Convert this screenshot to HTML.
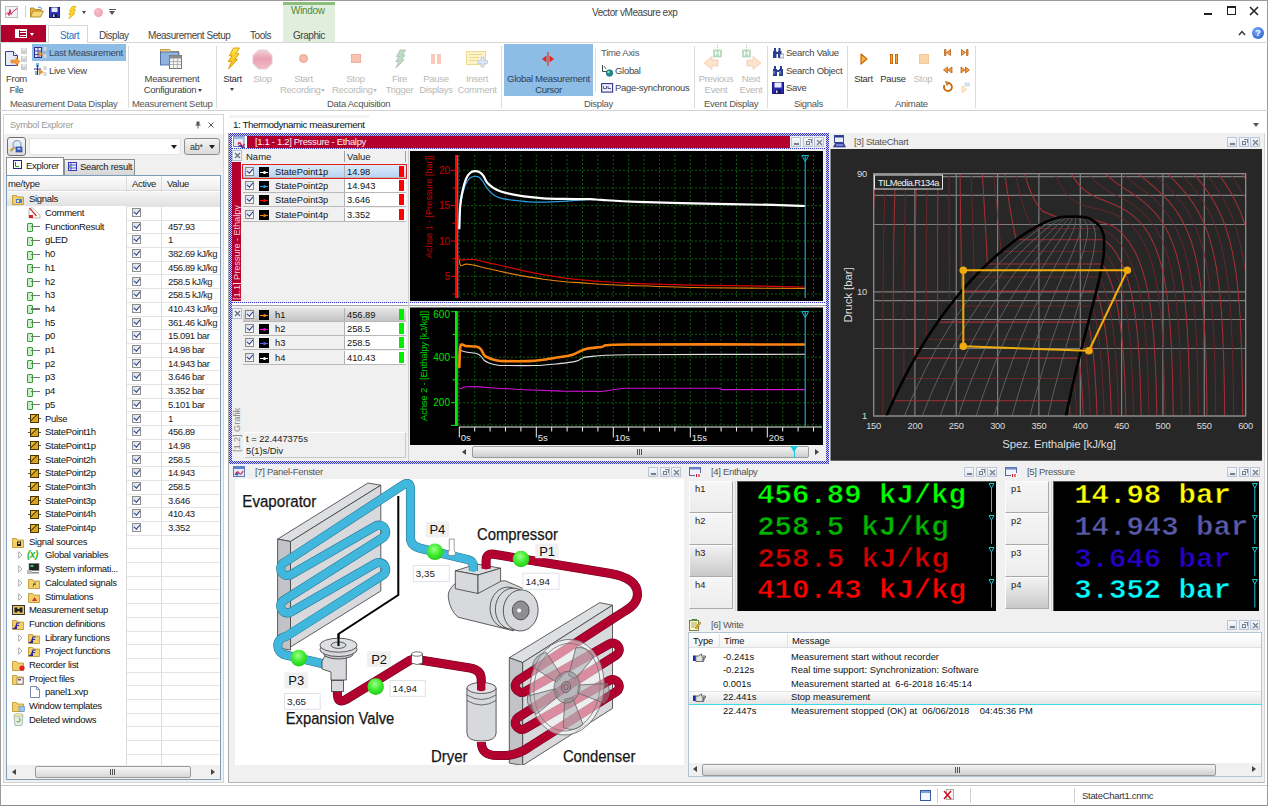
<!DOCTYPE html>
<html><head><meta charset="utf-8"><title>Vector vMeasure exp</title>
<style>
*{box-sizing:border-box;margin:0;padding:0}
html,body{width:1268px;height:806px;overflow:hidden;background:#fff}
body{font-family:"Liberation Sans",sans-serif;font-size:9.5px;letter-spacing:-0.3px;color:#444;position:relative}
.a{position:absolute}
.t{position:absolute;white-space:nowrap;line-height:12px}
.c{text-align:center}
.dis{color:#b9b9b9}
.sep{position:absolute;width:1px;background:#dcdcdc}
.wt{position:absolute;white-space:nowrap;line-height:12px;font-size:9.5px;color:#555}
.wb{position:absolute;width:10px;height:10px;border:1px solid #bcc6d6;background:linear-gradient(#f7f8fb,#dde5f0)}
/* tree */
.tr{position:absolute;left:0;width:214px;height:14px}
.tr .n{position:absolute;top:1px;white-space:nowrap;line-height:12px;color:#111}
.tr .v{position:absolute;left:161px;top:1px;white-space:nowrap;line-height:12px;color:#222;letter-spacing:-0.4px}
.cb{position:absolute;left:124.500px;top:2px;width:9px;height:9px;border:1px solid #8e8f8f;background:linear-gradient(135deg,#d8dce3,#fff)}
.cb:after{content:"";position:absolute;left:2px;top:-1px;width:2.5px;height:5px;border:solid #2b3f8f;border-width:0 1.5px 1.5px 0;transform:rotate(40deg)}
.sg{position:absolute;left:29px;top:3px;width:14px;height:8px}
.sg:before{content:"";position:absolute;left:0;top:0.500px;width:3.500px;height:7px;border:1px solid #3a9a3a;border-radius:1px;background:#c9f0c9}
.sg:after{content:"";position:absolute;left:3.500px;top:3.500px;width:9.500px;height:1.200px;background:#777}
.sp{position:absolute;left:29px;top:2px;width:13px;height:10px}
.sp:before{content:"";position:absolute;left:2px;top:.5px;width:7px;height:7px;background:linear-gradient(135deg,#e8b830 0,#e8b830 35%,#6a4a00 36%,#6a4a00 48%,#d9a520 49%);border:1px solid #4a3600;z-index:1}
.sp:after{content:"";position:absolute;left:0;top:4.500px;width:13px;height:1px;background:#555}
.mono{font-family:"Liberation Mono",monospace;font-weight:bold;letter-spacing:0}
</style></head>
<body>
<!-- window frame -->
<div class="a" style="left:0;top:0;width:1268px;height:806px;border:1px solid #9b9b9b;border-bottom-color:#8a8a8a"></div>

<!-- ===== TITLE BAR ===== -->
<div id="title">
<div class="t" style="left:592px;top:7px;font-size:10px;letter-spacing:-0.45px;color:#444">Vector vMeasure exp</div>
<!-- quick access -->
<svg class="a" style="left:5px;top:6px" width="13" height="12" viewBox="0 0 13 12"><rect x=".5" y=".5" width="12" height="11" fill="#f4f4f4" stroke="#bdbdbd"/><path d="M1 8.500l2-2 1 3 1-6 1 5 2-3 4-3" stroke="#c22050" stroke-width="1" fill="none"/></svg>
<div class="a" style="left:25px;top:6px;width:1px;height:11px;background:#ccc"></div>
<svg class="a" style="left:30px;top:6px" width="14" height="12" viewBox="0 0 14 12"><path d="M.5 11V2h3.500l1 1.500h6V5" fill="#e9b84a" stroke="#a87a18" stroke-width=".8"/><path d="M.5 11l2.500-6h10.500l-3 6z" fill="#f7d778" stroke="#a87a18" stroke-width=".8"/><path d="M8 1.500c2-1 3.500 0 4 1.500" stroke="#4477cc" stroke-width=".9" fill="none"/></svg>
<svg class="a" style="left:49px;top:7px" width="11" height="11" viewBox="0 0 11 11"><rect x=".5" y=".5" width="10" height="10" fill="#2b33b8" stroke="#1a1f80"/><rect x="2.500" y=".5" width="6" height="4.500" fill="#e9ecfa"/><rect x="3" y="7" width="5" height="3.500" fill="#14184f"/><rect x="4" y="7.500" width="1.500" height="2.500" fill="#cdd"/></svg>
<svg class="a" style="left:67px;top:6px" width="10" height="13" viewBox="0 0 10 13"><path d="M5 .5H9L6.500 4H8.700L6 7.300H8L2 13L4 8.500H1.800L4.300 5H2.500Z" fill="#ffd828" stroke="#e0a800" stroke-width=".7" stroke-linejoin="round"/></svg>
<div class="a" style="left:82px;top:11px;border:2.500px solid transparent;border-top:3px solid #444"></div>
<div class="a" style="left:94px;top:7.500px;width:9px;height:9px;border-radius:5px;background:radial-gradient(circle at 40% 40%,#f6c0cb,#e79aac)"></div>
<div class="a" style="left:109px;top:9px;width:7px;height:1px;background:#555"></div>
<div class="a" style="left:109px;top:11px;border:3.500px solid transparent;border-top:4px solid #555"></div>
<!-- context tab -->
<div class="a" style="left:283px;top:1px;width:52px;height:41px;background:#e2eedc"></div>
<div class="a" style="left:283px;top:1px;width:52px;height:4px;background:linear-gradient(#fff 0,#fff 1px,#8dbd7b 1px)"></div>
<div class="t" style="left:291px;top:5.300px;font-size:10px;color:#4e8a3a;letter-spacing:-0.3px">Window</div>
<!-- window buttons -->
<div class="a" style="left:1204px;top:13px;width:8px;height:2px;background:#222"></div>
<div class="a" style="left:1227px;top:6px;width:9px;height:9px;border:1px solid #222;border-top-width:2px"></div>
<svg class="a" style="left:1249px;top:6px" width="10" height="10"><path d="M1 1L9 9M9 1L1 9" stroke="#222" stroke-width="1.6"/></svg>
</div>

<!-- ===== TAB ROW ===== -->
<div id="tabs">
<div class="a" style="left:1px;top:25px;width:45px;height:17px;background:#b0002e"></div>
<div class="a" style="left:15px;top:29px;width:12px;height:9px;border:1px solid #fff;background:linear-gradient(90deg,#fff 0,#fff 3px,#b0002e 3px,#b0002e 4.500px,transparent 4.500px),repeating-linear-gradient(#fff 0,#fff 1px,#b0002e 1px,#b0002e 2.300px)"></div>
<div class="a" style="left:30px;top:33px;border:2.5px solid transparent;border-top:3px solid #fff"></div>
<div class="a" style="left:0;top:42px;width:1268px;height:1px;background:#d6d6d6"></div>
<div class="a" style="left:48px;top:25px;width:40px;height:18px;border:1px solid #d6d6d6;border-bottom:none;background:#fff"></div>
<div class="t" style="left:60px;top:29.700px;font-size:10px;color:#2a73c7;letter-spacing:-0.4px">Start</div>
<div class="t" style="left:99px;top:29.700px;font-size:10px;letter-spacing:-0.45px">Display</div>
<div class="t" style="left:148px;top:29.700px;font-size:10px;letter-spacing:-0.45px">Measurement Setup</div>
<div class="t" style="left:250px;top:29.700px;font-size:10px;letter-spacing:-0.45px">Tools</div>
<div class="t" style="left:293px;top:29.700px;font-size:10px;letter-spacing:-0.45px">Graphic</div>
<svg class="a" style="left:1238px;top:30px" width="8" height="6"><path d="M1 5L4 1.5L7 5" stroke="#333" stroke-width="1.4" fill="none"/></svg>
<div class="a" style="left:1252px;top:27px;width:12px;height:12px;border-radius:6px;background:radial-gradient(circle at 40% 35%,#7fb0ff,#1a4fc0);color:#fff;font-size:9px;font-weight:bold;text-align:center;line-height:12px;letter-spacing:0">?</div>
</div>

<!-- ===== RIBBON ===== -->
<div id="ribbon">
<div class="a" style="left:0;top:110px;width:1268px;height:1px;background:#d2d2d2"></div>
<!-- group separators -->
<div class="sep" style="left:128px;top:46px;height:62px"></div>
<div class="sep" style="left:216px;top:46px;height:62px"></div>
<div class="sep" style="left:501px;top:46px;height:62px"></div>
<div class="sep" style="left:595px;top:48px;height:44px"></div>
<div class="sep" style="left:694px;top:46px;height:62px"></div>
<div class="sep" style="left:767px;top:46px;height:62px"></div>
<div class="sep" style="left:847px;top:46px;height:62px"></div>
<div class="sep" style="left:975px;top:46px;height:62px"></div>
<!-- group labels -->
<div class="t" style="left:10px;top:98px;color:#555">Measurement Data Display</div>
<div class="t" style="left:132px;top:98px;color:#555">Measurement Setup</div>
<div class="t" style="left:327px;top:98px;color:#555">Data Acquisition</div>
<div class="t" style="left:584px;top:98px;color:#555">Display</div>
<div class="t" style="left:704px;top:98px;color:#555">Event Display</div>
<div class="t" style="left:794px;top:98px;color:#555">Signals</div>
<div class="t" style="left:895px;top:98px;color:#555">Animate</div>

<!-- From File -->
<svg class="a" style="left:4px;top:47px" width="24" height="24" viewBox="0 0 24 24">
<path d="M1.5 4.5h8l4 4v10h-12z" fill="#e6ecf6" stroke="#3c3c9a" stroke-width="1"/><path d="M9.5 4.5v4h4" fill="#fff" stroke="#3c3c9a" stroke-width="1"/>
<path d="M7 13h5v-2.5l4 4-4 4V16H7z" fill="#f59b3a" stroke="#d77a16" stroke-width=".6"/>
<rect x="17" y="1" width="6" height="6" fill="#cfcfcf"/><rect x="17" y="9" width="6" height="6" fill="#cfcfcf"/><rect x="17" y="17" width="6" height="6" fill="#cfcfcf"/>
<rect x="18.5" y="1" width="3" height="2.5" fill="#eee"/><rect x="18.5" y="9" width="3" height="2.5" fill="#eee"/><rect x="18.5" y="17" width="3" height="2.5" fill="#eee"/>
</svg>
<div class="t c" style="left:0;top:73px;width:33px">From</div>
<div class="t c" style="left:0;top:84px;width:33px">File</div>
<!-- Last Measurement -->
<div class="a" style="left:32px;top:44px;width:94px;height:17px;background:#8dbce4"></div>
<svg class="a" style="left:34px;top:47px" width="13" height="12" viewBox="0 0 13 12">
<rect x=".5" y=".5" width="7" height="10" fill="#dfe6f5" stroke="#2b2b90"/><path d="M.5 4h7M.5 7.5h7M4 .5v10" stroke="#2b2b90" stroke-width=".8"/>
<path d="M5 4l4 3-4 3z" fill="#f59b3a" stroke="#c96d0e" stroke-width=".5"/>
<rect x="9.5" y="0" width="3" height="4" fill="#d6d6d6"/><rect x="9.5" y="7" width="3" height="4" fill="#d6d6d6"/>
</svg>
<div class="t" style="left:49px;top:47px;color:#3a4657">Last Measurement</div>
<!-- Live View -->
<svg class="a" style="left:34px;top:63px" width="13" height="14" viewBox="0 0 13 14">
<rect x="2" y="0" width="3" height="4" fill="#7fb5e6"/><rect x="1" y="8" width="3" height="4" fill="#7fb5e6"/>
<path d="M0 6h7M3.5 2v10" stroke="#2b2b90" stroke-width="1"/>
<path d="M5 6l4 3-4 3z" fill="#f59b3a" stroke="#c96d0e" stroke-width=".5"/>
<rect x="9.5" y="3" width="3" height="4" fill="#d6d6d6"/><rect x="9.5" y="9" width="3" height="4" fill="#d6d6d6"/>
</svg>
<div class="t" style="left:49px;top:65px">Live View</div>

<!-- Measurement Configuration -->
<svg class="a" style="left:159px;top:48px" width="24" height="22" viewBox="0 0 24 22">
<path d="M1.5 1.5h9l1.5 2h8v13h-18.5z" fill="#f3d27a" stroke="#b58a22" stroke-width=".8"/>
<rect x="1.500" y="4" width="18" height="13" fill="#8fb4e0" stroke="#3d64a8" stroke-width=".8"/>
<rect x="10.500" y="7.500" width="12" height="13" fill="#f4f4f4" stroke="#6a6a6a" stroke-width=".9"/>
<rect x="10.500" y="7.500" width="12" height="3" fill="#8c8c8c"/>
<path d="M10.5 13.500h12M10.5 16.500h12M14.5 10.500v10M18.5 10.500v10" stroke="#9a9a9a" stroke-width=".7"/>
</svg>
<div class="t c" style="left:132px;top:73px;width:80px">Measurement</div>
<div class="t c" style="left:130px;top:84px;width:80px">Configuration</div>
<div class="a" style="left:198px;top:89px;border:2.5px solid transparent;border-top:3px solid #444"></div>

<!-- Start -->
<svg class="a" style="left:225px;top:47px" width="16" height="23" viewBox="0 0 16 23">
<defs><linearGradient id="lg1" x1="0" y1="0" x2="0" y2="1"><stop offset="0" stop-color="#ffe34a"/><stop offset="1" stop-color="#f5b800"/></linearGradient></defs>
<path d="M8.500 1H14.500L10.800 6.800H14L9.800 12.500H12.500L3.500 22L6.500 14.500H3.200L7 8.800H4.200Z" fill="url(#lg1)" stroke="#d89b00" stroke-width=".9" stroke-linejoin="round"/>
</svg>
<div class="t c" style="left:217px;top:73px;width:31px;color:#333">Start</div>
<div class="a" style="left:230px;top:88px;border:2.5px solid transparent;border-top:3px solid #444"></div>
<!-- Stop -->
<svg class="a" style="left:252px;top:49px" width="21" height="21" viewBox="0 0 21 21">
<defs><linearGradient id="lg2" x1="0" y1="0" x2="0" y2="1"><stop offset="0" stop-color="#f4d2d9"/><stop offset=".45" stop-color="#eaa0b3"/><stop offset="1" stop-color="#f1bcc8"/></linearGradient></defs>
<path d="M6.500 1h8l5.500 5.500v8l-5.500 5.500h-8L1 14.500v-8z" fill="url(#lg2)" stroke="#e4ccd2" stroke-width="1"/>
</svg>
<div class="t c dis" style="left:247px;top:73px;width:31px">Stop</div>
<!-- Start recording -->
<div class="a" style="left:299px;top:54px;width:9px;height:9px;border-radius:5px;background:#f7b9a8;border:1px solid #f1a090"></div>
<div class="t c dis" style="left:283px;top:73px;width:41px">Start</div>
<div class="t dis" style="left:280px;top:84px">Recording</div>
<div class="a" style="left:321px;top:89px;border:2.5px solid transparent;border-top:3px solid #b9b9b9"></div>
<!-- Stop recording -->
<div class="a" style="left:351px;top:54px;width:10px;height:9px;background:#f9c3b3;border:1px solid #f3ad9c"></div>
<div class="t c dis" style="left:335px;top:73px;width:41px">Stop</div>
<div class="t dis" style="left:332px;top:84px">Recording</div>
<div class="a" style="left:373px;top:89px;border:2.5px solid transparent;border-top:3px solid #b9b9b9"></div>
<!-- Fire Trigger -->
<svg class="a" style="left:393px;top:49px" width="14" height="20" viewBox="0 0 14 20">
<path d="M7 1H12.500L9.300 6H12L8.500 10.800H11L3 19L5.700 12.500H2.800L6 7.500H3.600Z" fill="#b9dfc0" stroke="#b4bcc0" stroke-width=".9" stroke-linejoin="round"/>
</svg>
<div class="t c dis" style="left:384px;top:73px;width:31px">Fire</div>
<div class="t c dis" style="left:384px;top:84px;width:31px">Trigger</div>
<!-- Pause Displays -->
<div class="a" style="left:431px;top:54px;width:4px;height:10px;background:#f9c9bb"></div>
<div class="a" style="left:437px;top:54px;width:4px;height:10px;background:#f9c9bb"></div>
<div class="t c dis" style="left:416px;top:73px;width:40px">Pause</div>
<div class="t c dis" style="left:416px;top:84px;width:40px">Displays</div>
<!-- Insert comment -->
<svg class="a" style="left:466px;top:50px" width="22" height="18" viewBox="0 0 22 18">
<rect x=".5" y="1.500" width="19" height="13" fill="#fdf3c4" stroke="#ecd98d"/>
<path d="M3 4.500h13M3 7.500h10M3 10.500h8" stroke="#e6d9a0" stroke-width="1"/>
<path d="M15 7v3.500h-3.500v3H15V17h3v-3.500h3.500v-3H18V7z" fill="#dbe6f6" stroke="#b7c9e6" stroke-width=".8"/>
</svg>
<div class="t c dis" style="left:457px;top:73px;width:40px">Insert</div>
<div class="t c dis" style="left:457px;top:84px;width:40px">Comment</div>

<!-- Global Measurement Cursor -->
<div class="a" style="left:504px;top:44px;width:89px;height:52px;background:#8dbce4"></div>
<svg class="a" style="left:541px;top:52px" width="14" height="14" viewBox="0 0 14 14">
<path d="M7 0v14" stroke="#e03a1c" stroke-width="1.2"/><path d="M5.500 3.500v7L1 7z" fill="#e8271a"/><path d="M8.500 3.500v7L13 7z" fill="#e8271a"/>
</svg>
<div class="t c" style="left:504px;top:73px;width:89px;color:#2c3f58">Global Measurement</div>
<div class="t c" style="left:504px;top:84px;width:89px;color:#2c3f58">Cursor</div>

<!-- Time axis -->
<div class="t" style="left:601px;top:47px;color:#555">Time Axis</div>
<svg class="a" style="left:601px;top:64px" width="13" height="13" viewBox="0 0 13 13">
<path d="M1.500 1v6.500h6" stroke="#333" stroke-width=".9" fill="none"/><path d="M3 2l2 3" stroke="#333" stroke-width=".7"/>
<circle cx="8.500" cy="9" r="3.300" fill="#1d8f86" stroke="#0d4f8a" stroke-width=".6"/><circle cx="7.500" cy="8" r="1.200" fill="#7fe0c0"/>
</svg>
<div class="t" style="left:615px;top:65px">Global</div>
<svg class="a" style="left:601px;top:82px" width="13" height="12" viewBox="0 0 13 12">
<rect x=".6" y="1.600" width="11" height="8.500" fill="#eef1fa" stroke="#33338c" stroke-width="1.100"/><path d="M2.500 4v2.500h3V4M7 4v2.500h3" stroke="#33338c" stroke-width=".8" fill="none"/>
</svg>
<div class="t" style="left:615px;top:82px">Page-synchronous</div>

<!-- Previous / Next event -->
<svg class="a" style="left:703px;top:45px" width="22" height="26" viewBox="0 0 22 26">
<path d="M1 18l8-6.500v3.500h6v6H9v3.500z" fill="#fbe3cd" stroke="#f3cba6" stroke-width=".8"/>
<rect x="10.500" y="5" width="8" height="7" fill="#b9dfc0" stroke="#a8d0b0" stroke-width=".6"/><path d="M14.500 0v5" stroke="#a8d0b0" stroke-width="1" stroke-dasharray="1 1"/>
<path d="M12.500 10.500v-4l2 2.500 2-2.500v4" stroke="#fff" stroke-width=".9" fill="none"/>
</svg>
<div class="t c dis" style="left:696px;top:73px;width:40px">Previous</div>
<div class="t c dis" style="left:696px;top:84px;width:40px">Event</div>
<svg class="a" style="left:739px;top:45px" width="24" height="26" viewBox="0 0 24 26">
<path d="M22 18l-8-6.500v3.500H8v6h6v3.500z" fill="#fbe3cd" stroke="#f3cba6" stroke-width=".8"/>
<rect x="3.500" y="5" width="8" height="7" fill="#b9dfc0" stroke="#a8d0b0" stroke-width=".6"/><path d="M7.500 0v5" stroke="#a8d0b0" stroke-width="1" stroke-dasharray="1 1"/>
<path d="M5.500 10.500v-4l2 2.500 2-2.500v4" stroke="#fff" stroke-width=".9" fill="none"/>
</svg>
<div class="t c dis" style="left:731px;top:73px;width:40px">Next</div>
<div class="t c dis" style="left:731px;top:84px;width:40px">Event</div>

<!-- Signals -->
<svg class="a" style="left:772px;top:47px" width="12" height="12" viewBox="0 0 12 12"><path d="M1 4h3.500v7H1zM6 4h3.500v7H6z M2 1h2v3H2z M6.500 1h2v3h-2z M4.500 5h1.500v2H4.500z" fill="#2b3f8f"/><rect x="8" y="7" width="4" height="4" fill="#e8eefb" stroke="#556" stroke-width=".5"/></svg>
<div class="t" style="left:786px;top:47px">Search Value</div>
<svg class="a" style="left:772px;top:65px" width="12" height="12" viewBox="0 0 12 12"><path d="M1 4h4v7H1zM7 4h4v7H7z M2 1h2v3H2z M8 1h2v3H8z M5 5h2v2H5z" fill="#2b3f8f"/><path d="M2 6v3M8 6v3" stroke="#9fb4ea" stroke-width="1"/></svg>
<div class="t" style="left:786px;top:65px">Search Object</div>
<svg class="a" style="left:772px;top:82px" width="12" height="12" viewBox="0 0 12 12"><rect x=".5" y=".5" width="11" height="11" fill="#2a2ab8" stroke="#1a1a80"/><rect x="2.500" y=".5" width="7" height="5" fill="#e9ecfa"/><rect x="3" y="7.500" width="6" height="4" fill="#1a1a60"/><rect x="4" y="8.500" width="1.500" height="2.500" fill="#dde"/></svg>
<div class="t" style="left:786px;top:82px">Save</div>

<!-- Animate -->
<svg class="a" style="left:860px;top:53px" width="8" height="12" viewBox="0 0 8 12"><path d="M1 1l6 5-6 5z" fill="#fbb040" stroke="#c8690a" stroke-width="1.200" stroke-linejoin="round"/></svg>
<div class="t c" style="left:848px;top:73px;width:31px;color:#333">Start</div>
<div class="a" style="left:890px;top:54px;width:3px;height:10px;background:#f9a545;border:1px solid #c8690a"></div>
<div class="a" style="left:895px;top:54px;width:3px;height:10px;background:#f9a545;border:1px solid #c8690a"></div>
<div class="t c" style="left:877px;top:73px;width:32px;color:#333">Pause</div>
<div class="a" style="left:919px;top:54px;width:10px;height:10px;background:#fbd5a7;border:1px solid #f3c89a"></div>
<div class="t c dis" style="left:907px;top:73px;width:32px">Stop</div>
<svg class="a" style="left:942px;top:48px" width="28" height="46" viewBox="0 0 28 46">
<g fill="#f59b3a" stroke="#a9520a" stroke-width=".7">
<path d="M2.500 1.500h1.500v6h-1.500zM8.500 1.500v6l-4-3z"/>
<path d="M24.500 1.500h1.500v6h-1.500zM19.500 1.500v6l4-3z"/>
<path d="M5.500 19v6l-4-3zM10 19v6l-4-3z"/>
<path d="M19 19v6l4-3zM23.500 19v6l4-3z"/>
<path d="M6 35a4 4 0 1 1-3.500 2" fill="none" stroke="#c8690a" stroke-width="1.800"/><path d="M3.500 33.500l3.500 1-2 3z" />
</g>
<path d="M20 38l5 3.500-5 3.500z" fill="#fde7c9" stroke="#f3cfa0" stroke-width=".7"/><rect x="23" y="35" width="5" height="3" fill="#dfe8f6" stroke="#b7c5dd" stroke-width=".6"/>
</svg>
</div>


<!-- ===== LEFT PANEL ===== -->
<div id="left">
<div class="a" style="left:3px;top:114px;width:221px;height:669px;background:#f0f0f0;border:1px solid #d4d4d4"></div>
<div class="a" style="left:4px;top:115px;width:219px;height:19px;background:#fff"></div>
<div class="t" style="left:10px;top:119px;font-size:9.300px;letter-spacing:-0.35px;color:#9a9a9a">Symbol Explorer</div>
<svg class="a" style="left:195px;top:121px" width="6" height="8" viewBox="0 0 6 8"><path d="M1.500.500h3v3.500h-3z" fill="#555"/><path d="M.5 4.200h5M3 4.200v3.300" stroke="#555" stroke-width=".9"/></svg>
<svg class="a" style="left:207.500px;top:121.500px" width="6" height="6"><path d="M.5.500l5 5M5.500.500l-5 5" stroke="#555" stroke-width="1"/></svg>
<!-- search row -->
<div class="a" style="left:7px;top:137px;width:19px;height:19px;border:1px solid #707070;border-radius:3px;background:linear-gradient(#f6f6f6,#dcdcdc)"></div>
<svg class="a" style="left:9px;top:139px" width="15" height="15" viewBox="0 0 15 15"><circle cx="8" cy="5.500" r="4" fill="#dbe9f8" stroke="#8aa4c4" stroke-width="1.200"/><path d="M5 8.500L1.500 12" stroke="#c89a2a" stroke-width="2"/><rect x="7" y="8" width="6" height="5" fill="#3c62c4" stroke="#24418f" stroke-width=".6"/><rect x="8.500" y="9" width="3" height="1.500" fill="#cfe0ff"/></svg>
<div class="a" style="left:29px;top:138px;width:152px;height:17px;border:1px solid #e3e3e3;border-radius:2px;background:#fff"></div>
<div class="a" style="left:171px;top:145px;border:3px solid transparent;border-top:4px solid #222"></div>
<div class="a" style="left:184px;top:138px;width:36px;height:17px;border:1px solid #8f8f8f;border-radius:3px;background:linear-gradient(#f4f4f4,#dadada)"></div>
<div class="t" style="left:190px;top:141px;font-size:9px;color:#333">ab*</div>
<div class="a" style="left:209px;top:145px;border:3px solid transparent;border-top:4px solid #222"></div>
<!-- tabs -->
<div class="a" style="left:64px;top:159px;width:71px;height:16px;border:1px solid #8e8f8f;border-bottom:none;background:linear-gradient(#f2f2f2,#d6d6d6)"></div>
<svg class="a" style="left:68px;top:162px" width="9" height="9"><rect x=".5" y=".5" width="8" height="8" fill="#e8ecff" stroke="#3a3ab0"/><path d="M3 .5v8M.5 3h8M.5 6h8" stroke="#3a3ab0" stroke-width=".8"/><rect x="1" y="3.500" width="1.500" height="2" fill="#2c2"/></svg>
<div class="t" style="left:80px;top:161px;color:#222">Search result</div>
<div class="a" style="left:6px;top:157px;width:58px;height:19px;border:1px solid #8e8f8f;border-bottom:none;background:#fff"></div>
<svg class="a" style="left:13px;top:160px" width="9" height="9"><rect x=".5" y=".5" width="8" height="8" fill="#fff" stroke="#24248c"/><path d="M2.500 2v4.500" stroke="#d22" stroke-width="1"/><path d="M3 6.500h3" stroke="#2a2" stroke-width="1"/></svg>
<div class="t" style="left:26px;top:160px;color:#222">Explorer</div>
<!-- list -->
<div class="a" style="left:6px;top:175px;width:215px;height:605px;border:1px solid #7f9db9;background:#fff;overflow:hidden" id="lst">
<div class="a" style="left:0;top:0;width:213px;height:15px;background:linear-gradient(#fdfdfd,#ededed);border-bottom:1px solid #d9d9d9"></div>
<div class="t" style="left:1px;top:2px;color:#222">me/type</div>
<div class="t" style="left:125px;top:2px;color:#222">Active</div>
<div class="t" style="left:160px;top:2px;color:#222">Value</div>
<div class="a" style="left:119px;top:29.9px;width:95px;height:1px;background:#e4e4e4"></div>
<div class="a" style="left:119px;top:43.6px;width:95px;height:1px;background:#e4e4e4"></div>
<div class="a" style="left:119px;top:57.3px;width:95px;height:1px;background:#e4e4e4"></div>
<div class="a" style="left:119px;top:71.0px;width:95px;height:1px;background:#e4e4e4"></div>
<div class="a" style="left:119px;top:84.7px;width:95px;height:1px;background:#e4e4e4"></div>
<div class="a" style="left:119px;top:98.4px;width:95px;height:1px;background:#e4e4e4"></div>
<div class="a" style="left:119px;top:112.1px;width:95px;height:1px;background:#e4e4e4"></div>
<div class="a" style="left:119px;top:125.8px;width:95px;height:1px;background:#e4e4e4"></div>
<div class="a" style="left:119px;top:139.5px;width:95px;height:1px;background:#e4e4e4"></div>
<div class="a" style="left:119px;top:153.2px;width:95px;height:1px;background:#e4e4e4"></div>
<div class="a" style="left:119px;top:166.9px;width:95px;height:1px;background:#e4e4e4"></div>
<div class="a" style="left:119px;top:180.6px;width:95px;height:1px;background:#e4e4e4"></div>
<div class="a" style="left:119px;top:194.3px;width:95px;height:1px;background:#e4e4e4"></div>
<div class="a" style="left:119px;top:208.0px;width:95px;height:1px;background:#e4e4e4"></div>
<div class="a" style="left:119px;top:221.7px;width:95px;height:1px;background:#e4e4e4"></div>
<div class="a" style="left:119px;top:235.4px;width:95px;height:1px;background:#e4e4e4"></div>
<div class="a" style="left:119px;top:249.1px;width:95px;height:1px;background:#e4e4e4"></div>
<div class="a" style="left:119px;top:262.7px;width:95px;height:1px;background:#e4e4e4"></div>
<div class="a" style="left:119px;top:276.4px;width:95px;height:1px;background:#e4e4e4"></div>
<div class="a" style="left:119px;top:290.1px;width:95px;height:1px;background:#e4e4e4"></div>
<div class="a" style="left:119px;top:303.8px;width:95px;height:1px;background:#e4e4e4"></div>
<div class="a" style="left:119px;top:317.5px;width:95px;height:1px;background:#e4e4e4"></div>
<div class="a" style="left:119px;top:331.2px;width:95px;height:1px;background:#e4e4e4"></div>
<div class="a" style="left:119px;top:344.9px;width:95px;height:1px;background:#e4e4e4"></div>
<div class="a" style="left:119px;top:358.6px;width:95px;height:1px;background:#e4e4e4"></div>
<div class="a" style="left:119px;top:372.3px;width:95px;height:1px;background:#e4e4e4"></div>
<div class="a" style="left:119px;top:386.0px;width:95px;height:1px;background:#e4e4e4"></div>
<div class="a" style="left:119px;top:399.7px;width:95px;height:1px;background:#e4e4e4"></div>
<div class="a" style="left:119px;top:413.4px;width:95px;height:1px;background:#e4e4e4"></div>
<div class="a" style="left:119px;top:427.1px;width:95px;height:1px;background:#e4e4e4"></div>
<div class="a" style="left:119px;top:440.8px;width:95px;height:1px;background:#e4e4e4"></div>
<div class="a" style="left:119px;top:454.5px;width:95px;height:1px;background:#e4e4e4"></div>
<div class="a" style="left:119px;top:468.2px;width:95px;height:1px;background:#e4e4e4"></div>
<div class="a" style="left:119px;top:481.9px;width:95px;height:1px;background:#e4e4e4"></div>
<div class="a" style="left:119px;top:495.6px;width:95px;height:1px;background:#e4e4e4"></div>
<div class="a" style="left:119px;top:509.3px;width:95px;height:1px;background:#e4e4e4"></div>
<div class="a" style="left:119px;top:523.0px;width:95px;height:1px;background:#e4e4e4"></div>
<div class="a" style="left:119px;top:536.7px;width:95px;height:1px;background:#e4e4e4"></div>
<div class="a" style="left:119px;top:550.4px;width:95px;height:1px;background:#e4e4e4"></div>
<div class="a" style="left:119px;top:564.1px;width:95px;height:1px;background:#e4e4e4"></div>
<div class="a" style="left:119px;top:577.8px;width:95px;height:1px;background:#e4e4e4"></div>
<div class="a" style="left:119px;top:0;width:1px;height:590px;background:#dcdcdc"></div>
<div class="a" style="left:154px;top:0;width:1px;height:590px;background:#dcdcdc"></div>
<div class="tr" style="top:16.3px;background:linear-gradient(#f4f4f4,#e2e2e2);"><svg class="a" style="left:5px;top:2px" width="13" height="11" viewBox="0 0 13 11"><path d="M.5 1.500h4l1 1.500h6v7.500h-11z" fill="#f2cf6b" stroke="#b8902a" stroke-width=".8"/><rect x="4" y="5" width="6" height="4" fill="#4a7fd0"/><rect x="5" y="6" width="2" height="2" fill="#ffe9a0"/></svg><span class="n" style="left:22px">Signals</span></div>
<div class="tr" style="top:30.0px;"><svg class="a" style="left:21px;top:1px" width="13" height="12" viewBox="0 0 13 12"><path d="M1 11V3l3-2.500 8 7.500v3z" fill="#fff" stroke="#999" stroke-width=".7"/><path d="M1.500 1l7 8" stroke="#c33" stroke-width="1.200"/><rect x="1" y="8" width="4" height="3" fill="#d22"/></svg><span class="n" style="left:38px">Comment</span><i class="cb"></i></div>
<div class="tr" style="top:43.7px;"><i class="sg" style="left:20px"></i><span class="n" style="left:38px">FunctionResult</span><i class="cb"></i><span class="v">457.93</span></div>
<div class="tr" style="top:57.4px;"><i class="sg" style="left:20px"></i><span class="n" style="left:38px">gLED</span><i class="cb"></i><span class="v">1</span></div>
<div class="tr" style="top:71.1px;"><i class="sg" style="left:20px"></i><span class="n" style="left:38px">h0</span><i class="cb"></i><span class="v">382.69 kJ/kg</span></div>
<div class="tr" style="top:84.8px;"><i class="sg" style="left:20px"></i><span class="n" style="left:38px">h1</span><i class="cb"></i><span class="v">456.89 kJ/kg</span></div>
<div class="tr" style="top:98.5px;"><i class="sg" style="left:20px"></i><span class="n" style="left:38px">h2</span><i class="cb"></i><span class="v">258.5 kJ/kg</span></div>
<div class="tr" style="top:112.2px;"><i class="sg" style="left:20px"></i><span class="n" style="left:38px">h3</span><i class="cb"></i><span class="v">258.5 kJ/kg</span></div>
<div class="tr" style="top:125.9px;"><i class="sg" style="left:20px"></i><span class="n" style="left:38px">h4</span><i class="cb"></i><span class="v">410.43 kJ/kg</span></div>
<div class="tr" style="top:139.6px;"><i class="sg" style="left:20px"></i><span class="n" style="left:38px">h5</span><i class="cb"></i><span class="v">361.46 kJ/kg</span></div>
<div class="tr" style="top:153.3px;"><i class="sg" style="left:20px"></i><span class="n" style="left:38px">p0</span><i class="cb"></i><span class="v">15.091 bar</span></div>
<div class="tr" style="top:167.0px;"><i class="sg" style="left:20px"></i><span class="n" style="left:38px">p1</span><i class="cb"></i><span class="v">14.98 bar</span></div>
<div class="tr" style="top:180.7px;"><i class="sg" style="left:20px"></i><span class="n" style="left:38px">p2</span><i class="cb"></i><span class="v">14.943 bar</span></div>
<div class="tr" style="top:194.4px;"><i class="sg" style="left:20px"></i><span class="n" style="left:38px">p3</span><i class="cb"></i><span class="v">3.646 bar</span></div>
<div class="tr" style="top:208.1px;"><i class="sg" style="left:20px"></i><span class="n" style="left:38px">p4</span><i class="cb"></i><span class="v">3.352 bar</span></div>
<div class="tr" style="top:221.8px;"><i class="sg" style="left:20px"></i><span class="n" style="left:38px">p5</span><i class="cb"></i><span class="v">5.101 bar</span></div>
<div class="tr" style="top:235.5px;"><i class="sp" style="left:21px"></i><span class="n" style="left:38px">Pulse</span><i class="cb"></i><span class="v">1</span></div>
<div class="tr" style="top:249.1px;"><i class="sp" style="left:21px"></i><span class="n" style="left:38px">StatePoint1h</span><i class="cb"></i><span class="v">456.89</span></div>
<div class="tr" style="top:262.8px;"><i class="sp" style="left:21px"></i><span class="n" style="left:38px">StatePoint1p</span><i class="cb"></i><span class="v">14.98</span></div>
<div class="tr" style="top:276.5px;"><i class="sp" style="left:21px"></i><span class="n" style="left:38px">StatePoint2h</span><i class="cb"></i><span class="v">258.5</span></div>
<div class="tr" style="top:290.2px;"><i class="sp" style="left:21px"></i><span class="n" style="left:38px">StatePoint2p</span><i class="cb"></i><span class="v">14.943</span></div>
<div class="tr" style="top:303.9px;"><i class="sp" style="left:21px"></i><span class="n" style="left:38px">StatePoint3h</span><i class="cb"></i><span class="v">258.5</span></div>
<div class="tr" style="top:317.6px;"><i class="sp" style="left:21px"></i><span class="n" style="left:38px">StatePoint3p</span><i class="cb"></i><span class="v">3.646</span></div>
<div class="tr" style="top:331.3px;"><i class="sp" style="left:21px"></i><span class="n" style="left:38px">StatePoint4h</span><i class="cb"></i><span class="v">410.43</span></div>
<div class="tr" style="top:345.0px;"><i class="sp" style="left:21px"></i><span class="n" style="left:38px">StatePoint4p</span><i class="cb"></i><span class="v">3.352</span></div>
<div class="tr" style="top:358.7px;"><svg class="a" style="left:5px;top:2px" width="13" height="11" viewBox="0 0 13 11"><path d="M.5 1.500h4l1 1.500h6v7.500h-11z" fill="#f2cf6b" stroke="#b8902a" stroke-width=".8"/><rect x="5" y="4.500" width="4" height="4.500" fill="#222"/><rect x="6" y="5.500" width="2" height="1.500" fill="#f2cf6b"/></svg><span class="n" style="left:22px">Signal sources</span></div>
<div class="tr" style="top:372.4px;"><svg class="a" style="left:11px;top:3px" width="5" height="8"><path d="M.7.700L4 4 .7 7.300z" fill="none" stroke="#999" stroke-width=".8"/></svg><div class="a" style="left:20px;top:0;font-size:10px;line-height:13px;font-style:italic;font-weight:bold;color:#2db52d;letter-spacing:-0.5px">(x)</div><span class="n" style="left:38px">Global variables</span></div>
<div class="tr" style="top:386.1px;"><svg class="a" style="left:11px;top:3px" width="5" height="8"><path d="M.7.700L4 4 .7 7.300z" fill="none" stroke="#999" stroke-width=".8"/></svg><svg class="a" style="left:20px;top:1px" width="13" height="12" viewBox="0 0 13 12"><rect x="2" y=".5" width="10" height="7" fill="#222" stroke="#777" stroke-width=".6"/><rect x="3.500" y="2" width="3" height="2" fill="#3c6"/><rect x="0" y="7" width="5" height="4" fill="#bbb"/><rect x="5" y="9" width="7" height="1.500" fill="#888"/></svg><span class="n" style="left:38px">System informati...</span></div>
<div class="tr" style="top:399.8px;"><svg class="a" style="left:11px;top:3px" width="5" height="8"><path d="M.7.700L4 4 .7 7.300z" fill="none" stroke="#999" stroke-width=".8"/></svg><svg class="a" style="left:21px;top:2px" width="13" height="11" viewBox="0 0 13 11"><path d="M.5 1.500h4l1 1.500h6v7.500h-11z" fill="#f2cf6b" stroke="#b8902a" stroke-width=".8"/><path d="M5 9l1-4h2M5 6.500h3" stroke="#553" stroke-width=".8" fill="none"/></svg><span class="n" style="left:38px">Calculated signals</span></div>
<div class="tr" style="top:413.5px;"><svg class="a" style="left:11px;top:3px" width="5" height="8"><path d="M.7.700L4 4 .7 7.300z" fill="none" stroke="#999" stroke-width=".8"/></svg><svg class="a" style="left:21px;top:2px" width="13" height="11" viewBox="0 0 13 11"><path d="M.5 1.500h4l1 1.500h6v7.500h-11z" fill="#f2cf6b" stroke="#b8902a" stroke-width=".8"/><path d="M4 9l2.500-4 2.500 4z" fill="#d33"/></svg><span class="n" style="left:38px">Stimulations</span></div>
<div class="tr" style="top:427.2px;"><svg class="a" style="left:5px;top:2px" width="13" height="10" viewBox="0 0 13 10"><rect x=".5" y=".5" width="12" height="9" fill="#e8c660" stroke="#222" stroke-width=".9"/><rect x="2.500" y="2.500" width="3" height="5" fill="#222"/><rect x="7.500" y="2.500" width="3" height="5" fill="#222"/><rect x="5" y="4" width="3" height="2" fill="#222"/></svg><span class="n" style="left:22px">Measurement setup</span></div>
<div class="tr" style="top:440.9px;"><svg class="a" style="left:5px;top:2px" width="13" height="11" viewBox="0 0 13 11"><path d="M.5 1.500h4l1 1.500h6v7.500h-11z" fill="#f2cf6b" stroke="#b8902a" stroke-width=".8"/><path d="M3 10l2-6h2.500M3.500 6.500H7" stroke="#22a" stroke-width="1.100" fill="none"/><path d="M0 10l5-3v3z" fill="#22a"/></svg><span class="n" style="left:22px">Function definitions</span></div>
<div class="tr" style="top:454.6px;"><svg class="a" style="left:11px;top:3px" width="5" height="8"><path d="M.7.700L4 4 .7 7.300z" fill="none" stroke="#999" stroke-width=".8"/></svg><svg class="a" style="left:21px;top:2px" width="13" height="11" viewBox="0 0 13 11"><path d="M.5 1.500h4l1 1.500h6v7.500h-11z" fill="#f2cf6b" stroke="#b8902a" stroke-width=".8"/><path d="M3 10l2-6h2.500M3.500 6.500H7" stroke="#22a" stroke-width="1.100" fill="none"/><path d="M0 10l5-3v3z" fill="#22a"/></svg><span class="n" style="left:38px">Library functions</span></div>
<div class="tr" style="top:468.3px;"><svg class="a" style="left:11px;top:3px" width="5" height="8"><path d="M.7.700L4 4 .7 7.300z" fill="none" stroke="#999" stroke-width=".8"/></svg><svg class="a" style="left:21px;top:2px" width="13" height="11" viewBox="0 0 13 11"><path d="M.5 1.500h4l1 1.500h6v7.500h-11z" fill="#f2cf6b" stroke="#b8902a" stroke-width=".8"/><path d="M3 10l2-6h2.500M3.500 6.500H7" stroke="#22a" stroke-width="1.100" fill="none"/><path d="M0 10l5-3v3z" fill="#22a"/></svg><span class="n" style="left:38px">Project functions</span></div>
<div class="tr" style="top:482.0px;"><svg class="a" style="left:5px;top:2px" width="13" height="11" viewBox="0 0 13 11"><path d="M.5 1.500h4l1 1.500h6v7.500h-11z" fill="#f2cf6b" stroke="#b8902a" stroke-width=".8"/><circle cx="10" cy="8" r="2.600" fill="#e0202a"/></svg><span class="n" style="left:22px">Recorder list</span></div>
<div class="tr" style="top:495.7px;"><svg class="a" style="left:5px;top:2px" width="13" height="11" viewBox="0 0 13 11"><path d="M.5 1.500h4l1 1.500h6v7.500h-11z" fill="#f2cf6b" stroke="#b8902a" stroke-width=".8"/><rect x="5" y="4" width="6" height="6" fill="#f8f8f8" stroke="#666" stroke-width=".6"/><rect x="6" y="5" width="3" height="1.500" fill="#844"/></svg><span class="n" style="left:22px">Project files</span></div>
<div class="tr" style="top:509.4px;"><svg class="a" style="left:23px;top:1px" width="10" height="12" viewBox="0 0 10 12"><path d="M.5.500h6l3 3v8h-9z" fill="#fff" stroke="#6a7ba8" stroke-width=".9"/><path d="M6.500.500v3h3" fill="none" stroke="#6a7ba8" stroke-width=".8"/></svg><span class="n" style="left:38px">panel1.xvp</span></div>
<div class="tr" style="top:523.1px;"><svg class="a" style="left:5px;top:2px" width="13" height="11" viewBox="0 0 13 11"><path d="M.5 1.500h4l1 1.500h6v7.500h-11z" fill="#f2cf6b" stroke="#b8902a" stroke-width=".8"/><rect x="7" y="5.500" width="5.500" height="5" fill="#9fc4ee" stroke="#5a86c4" stroke-width=".6"/></svg><span class="n" style="left:22px">Window templates</span></div>
<div class="tr" style="top:536.8px;"><svg class="a" style="left:6px;top:0" width="11" height="13" viewBox="0 0 11 13"><path d="M1 2h9l-1 10.500H2z" fill="#e8efe0" stroke="#9aa" stroke-width=".8"/><ellipse cx="5.500" cy="2" rx="4.500" ry="1.500" fill="#f6e9a8" stroke="#9aa" stroke-width=".6"/><path d="M3.500 8a2 2 0 1 0 2-3" stroke="#3a9a3a" stroke-width="1" fill="none"/></svg><span class="n" style="left:22px">Deleted windows</span></div>
<!-- h scrollbar -->
<div class="a" style="left:0;top:589px;width:213px;height:14px;background:#f0f0f0"></div>
<div class="a" style="left:5px;top:593px;border:3px solid transparent;border-right:4px solid #444;border-left:none"></div>
<div class="a" style="left:204px;top:593px;border:3px solid transparent;border-left:4px solid #444;border-right:none"></div>
<div class="a" style="left:28px;top:590px;width:156px;height:12px;border:1px solid #9a9a9a;border-radius:2px;background:linear-gradient(#f6f6f6,#d8d8d8)"></div>
<div class="a" style="left:103px;top:593px;width:6px;height:6px;background:repeating-linear-gradient(90deg,#555 0,#555 1px,transparent 1px,transparent 2px)"></div>
</div>
</div>

<!-- ===== MDI AREA ===== -->
<div id="mdi">
<div class="a" style="left:228px;top:133px;width:1037px;height:650px;background:#f0f0f0;border-left:1px solid #a8a8a8;border-bottom:1px solid #b4b4b4;border-right:1px solid #d4d4d4"></div>
<div class="a" style="left:229px;top:115px;width:140px;height:3px;background:#f3f3f3"></div>
<div class="t" style="left:233px;top:119px;font-size:9.800px;letter-spacing:-0.43px;color:#111">1: Thermodynamic measurement</div>
<div class="a" style="left:1253px;top:123px;border:3.500px solid transparent;border-top:4px solid #555"></div>
<div class="a" style="left:229px;top:133px;width:600px;height:331px;background:repeating-conic-gradient(#3434c4 0% 25%,#d4d4f4 0% 50%) 0 0/2px 2px"></div>
<div class="a" style="left:232px;top:136px;width:594px;height:325px;background:#f0f0f0"></div>
<div class="a" style="left:232px;top:136px;width:15px;height:12px;background:#fff"></div>
<svg class="a" style="left:233px;top:136px" width="13" height="12" viewBox="0 0 13 12"><rect x=".5" y=".5" width="10.500" height="10" fill="#e4ebf6" stroke="#6a86b8" stroke-width="1"/><rect x=".5" y=".5" width="10.500" height="2.500" fill="#9db8e0"/><path d="M5 8.500q1.500-3.500 3 0t3.500-.5" stroke="#d01030" stroke-width="1.300" fill="none"/><path d="M5.500 11q1.500-2.500 3-.3t3 .3" stroke="#2030b0" stroke-width="1.300" fill="none"/></svg>
<div class="a" style="left:247px;top:136px;width:543px;height:12px;background:#b3002d"></div>
<div class="t" style="left:255px;top:136px;font-size:9.500px;letter-spacing:-0.330px;color:#fdf0f2">[1.1 - 1.2] Pressure - Ethalpy</div>
<div class="wb" style="left:791px;top:137px;width:10px;height:10px"></div><div class="wb" style="left:802.6px;top:137px;width:10px;height:10px"></div><div class="wb" style="left:814.2px;top:137px;width:10px;height:10px"></div><div class="a" style="left:793.5px;top:143px;width:5px;height:2px;background:#7a808a"></div><div class="a" style="left:805.6px;top:141px;width:4px;height:4px;border:1px solid #7a808a"></div><div class="a" style="left:807.6px;top:139px;width:4px;height:4px;border:1px solid #7a808a;border-bottom:none;border-left:none"></div><svg class="a" style="left:815.8px;top:139px" width="7" height="7"><path d="M1 1l5 5M6 1l-5 5" stroke="#7a808a" stroke-width="1.300"/></svg>
<div class="a" style="left:232px;top:148px;width:594px;height:1px;background:repeating-linear-gradient(90deg,#3434c4 0,#3434c4 1px,#e4e4f8 1px,#e4e4f8 2px)"></div>
<div class="a" style="left:232px;top:302px;width:594px;height:1px;background:repeating-linear-gradient(90deg,#3434c4 0,#3434c4 1px,#e4e4f8 1px,#e4e4f8 2px)"></div>
<div class="a" style="left:232px;top:303px;width:594px;height:2px;background:#fff"></div>
<div class="a" style="left:232px;top:305px;width:594px;height:1px;background:#a8a8a8"></div>
<div class="a" style="left:232px;top:150px;width:10px;height:11px;border:1px solid #b4c0d4;background:#eef1f6"></div><svg class="a" style="left:234px;top:152px" width="7" height="7"><path d="M1 1l5 5M6 1l-5 5" stroke="#6a7280" stroke-width="1.400"/></svg>
<div class="a" style="left:232px;top:308px;width:10px;height:11px;border:1px solid #b4c0d4;background:#eef1f6"></div><svg class="a" style="left:234px;top:310px" width="7" height="7"><path d="M1 1l5 5M6 1l-5 5" stroke="#6a7280" stroke-width="1.400"/></svg>
<div class="a" style="left:232px;top:162px;width:9px;height:139px;background:#b3002d"></div>
<div class="t" style="left:236.500px;top:300px;transform-origin:0 0;transform:rotate(-90deg) translateY(-6px);font-size:9.300px;letter-spacing:-0.100px;color:#f7d3da;line-height:12px">[1.1] Pressure - Ethalpy</div>
<div class="t" style="left:236.500px;top:452px;transform-origin:0 0;transform:rotate(-90deg) translateY(-6px);font-size:9.300px;letter-spacing:-0.100px;color:#8a8a8a;line-height:12px">[1.2] Grafik</div>
<div class="t" style="left:246px;top:151px;color:#222;letter-spacing:0;font-size:9.500px">Name</div>
<div class="t" style="left:347px;top:151px;color:#222;letter-spacing:0;font-size:9.500px">Value</div>
<div class="a" style="left:344px;top:151px;width:1px;height:11px;background:#a0a0a0"></div><div class="a" style="left:405px;top:151px;width:1px;height:11px;background:#a0a0a0"></div>
<div class="a" style="left:243px;top:165px;width:163px;height:13px;background:linear-gradient(#dcebfb,#b9d5f3);outline:1px solid #e02020;border-bottom:1px solid #b8b8b8"><div class="a" style="left:0;top:0;width:102px;height:13px;border-right:1px solid #b0b0b0"></div><i class="cb" style="left:2px;top:2px;border-color:#8a8a8a"></i><div class="a" style="left:16px;top:2px;width:10px;height:10px;background:#000"></div><div class="a" style="left:17px;top:6.500px;width:8px;height:1px;background:#fff"></div><div class="a" style="left:20px;top:5.500px;width:3px;height:3px;border-radius:2px;background:#fff"></div><div class="t" style="left:32px;top:1px;color:#111;letter-spacing:0;font-size:9.300px">StatePoint1p</div><div class="t" style="left:104px;top:1px;color:#111;letter-spacing:0;font-size:9.300px">14.98</div><div class="a" style="left:156px;top:1px;width:5px;height:11px;background:#f00"></div></div>
<div class="a" style="left:243px;top:179px;width:163px;height:14px;background:#fff;border-bottom:1px solid #b8b8b8"><div class="a" style="left:0;top:0;width:102px;height:13px;background:#f0f0f0;border-right:1px solid #b0b0b0"></div><i class="cb" style="left:2px;top:2px;border-color:#8a8a8a"></i><div class="a" style="left:16px;top:2px;width:10px;height:10px;background:#000"></div><div class="a" style="left:17px;top:6.500px;width:8px;height:1px;background:#2a9be0"></div><div class="a" style="left:20px;top:5.500px;width:3px;height:3px;border-radius:2px;background:#2a9be0"></div><div class="t" style="left:32px;top:1px;color:#111;letter-spacing:0;font-size:9.300px">StatePoint2p</div><div class="t" style="left:104px;top:1px;color:#111;letter-spacing:0;font-size:9.300px">14.943</div><div class="a" style="left:156px;top:1px;width:5px;height:11px;background:#f00"></div></div>
<div class="a" style="left:243px;top:193px;width:163px;height:14px;background:#fff;border-bottom:1px solid #b8b8b8"><div class="a" style="left:0;top:0;width:102px;height:13px;background:#f0f0f0;border-right:1px solid #b0b0b0"></div><i class="cb" style="left:2px;top:2px;border-color:#8a8a8a"></i><div class="a" style="left:16px;top:2px;width:10px;height:10px;background:#000"></div><div class="a" style="left:17px;top:6.500px;width:8px;height:1px;background:#f00"></div><div class="a" style="left:20px;top:5.500px;width:3px;height:3px;border-radius:2px;background:#f00"></div><div class="t" style="left:32px;top:1px;color:#111;letter-spacing:0;font-size:9.300px">StatePoint3p</div><div class="t" style="left:104px;top:1px;color:#111;letter-spacing:0;font-size:9.300px">3.646</div><div class="a" style="left:156px;top:1px;width:5px;height:11px;background:#f00"></div></div>
<div class="a" style="left:243px;top:208px;width:163px;height:14px;background:#fff;border-bottom:1px solid #b8b8b8"><div class="a" style="left:0;top:0;width:102px;height:13px;background:#f0f0f0;border-right:1px solid #b0b0b0"></div><i class="cb" style="left:2px;top:2px;border-color:#8a8a8a"></i><div class="a" style="left:16px;top:2px;width:10px;height:10px;background:#000"></div><div class="a" style="left:17px;top:6.500px;width:8px;height:1px;background:#e8820c"></div><div class="a" style="left:20px;top:5.500px;width:3px;height:3px;border-radius:2px;background:#e8820c"></div><div class="t" style="left:32px;top:1px;color:#111;letter-spacing:0;font-size:9.300px">StatePoint4p</div><div class="t" style="left:104px;top:1px;color:#111;letter-spacing:0;font-size:9.300px">3.352</div><div class="a" style="left:156px;top:1px;width:5px;height:11px;background:#f00"></div></div>
<div class="a" style="left:243px;top:308px;width:163px;height:14px;background:linear-gradient(#e6e6e6,#c4c4c4);border-bottom:1px solid #b8b8b8"><div class="a" style="left:0;top:0;width:102px;height:13px;border-right:1px solid #b0b0b0"></div><i class="cb" style="left:2px;top:2px;border-color:#8a8a8a"></i><div class="a" style="left:16px;top:2px;width:10px;height:10px;background:#000"></div><div class="a" style="left:17px;top:6.500px;width:8px;height:1px;background:#ff8410"></div><div class="a" style="left:20px;top:5.500px;width:3px;height:3px;border-radius:2px;background:#ff8410"></div><div class="t" style="left:32px;top:1px;color:#111;letter-spacing:0;font-size:9.300px">h1</div><div class="t" style="left:104px;top:1px;color:#111;letter-spacing:0;font-size:9.300px">456.89</div><div class="a" style="left:156px;top:1px;width:5px;height:11px;background:#0e0"></div></div>
<div class="a" style="left:243px;top:322px;width:163px;height:14px;background:#fff;border-bottom:1px solid #b8b8b8"><div class="a" style="left:0;top:0;width:102px;height:13px;background:#f0f0f0;border-right:1px solid #b0b0b0"></div><i class="cb" style="left:2px;top:2px;border-color:#8a8a8a"></i><div class="a" style="left:16px;top:2px;width:10px;height:10px;background:#000"></div><div class="a" style="left:17px;top:6.500px;width:8px;height:1px;background:#e010e0"></div><div class="a" style="left:20px;top:5.500px;width:3px;height:3px;border-radius:2px;background:#e010e0"></div><div class="t" style="left:32px;top:1px;color:#111;letter-spacing:0;font-size:9.300px">h2</div><div class="t" style="left:104px;top:1px;color:#111;letter-spacing:0;font-size:9.300px">258.5</div><div class="a" style="left:156px;top:1px;width:5px;height:11px;background:#0e0"></div></div>
<div class="a" style="left:243px;top:336px;width:163px;height:14px;background:#fff;border-bottom:1px solid #b8b8b8"><div class="a" style="left:0;top:0;width:102px;height:13px;background:#f0f0f0;border-right:1px solid #b0b0b0"></div><i class="cb" style="left:2px;top:2px;border-color:#8a8a8a"></i><div class="a" style="left:16px;top:2px;width:10px;height:10px;background:#000"></div><div class="a" style="left:17px;top:6.500px;width:8px;height:1px;background:#5a5ae8"></div><div class="a" style="left:20px;top:5.500px;width:3px;height:3px;border-radius:2px;background:#5a5ae8"></div><div class="t" style="left:32px;top:1px;color:#111;letter-spacing:0;font-size:9.300px">h3</div><div class="t" style="left:104px;top:1px;color:#111;letter-spacing:0;font-size:9.300px">258.5</div><div class="a" style="left:156px;top:1px;width:5px;height:11px;background:#0e0"></div></div>
<div class="a" style="left:243px;top:351px;width:163px;height:14px;background:#fff;border-bottom:1px solid #b8b8b8"><div class="a" style="left:0;top:0;width:102px;height:13px;background:#f0f0f0;border-right:1px solid #b0b0b0"></div><i class="cb" style="left:2px;top:2px;border-color:#8a8a8a"></i><div class="a" style="left:16px;top:2px;width:10px;height:10px;background:#000"></div><div class="a" style="left:17px;top:6.500px;width:8px;height:1px;background:#fff"></div><div class="a" style="left:20px;top:5.500px;width:3px;height:3px;border-radius:2px;background:#fff"></div><div class="t" style="left:32px;top:1px;color:#111;letter-spacing:0;font-size:9.300px">h4</div><div class="t" style="left:104px;top:1px;color:#111;letter-spacing:0;font-size:9.300px">410.43</div><div class="a" style="left:156px;top:1px;width:5px;height:11px;background:#0e0"></div></div>
<div class="a" style="left:244px;top:432px;width:162px;height:26px;border:1px solid #c8c8c8;border-top-color:#fff;border-left-color:#fff;background:#f0f0f0"></div>
<div class="t" style="left:246px;top:433px;color:#222;letter-spacing:0;font-size:9.300px">t = 22.447375s</div>
<div class="t" style="left:246px;top:445px;color:#222;letter-spacing:0;font-size:9.300px">5(1)s/Div</div>
<div class="a" style="left:408px;top:150px;width:1px;height:311px;background:#d0d0d0"></div>
<div class="a" style="left:456px;top:446px;width:368px;height:12px;background:#f0f0f0"></div>
<div class="a" style="left:462px;top:449px;border:3px solid transparent;border-right:4px solid #444;border-left:none"></div>
<div class="a" style="left:815px;top:449px;border:3px solid transparent;border-left:4px solid #444;border-right:none"></div>
<div class="a" style="left:472px;top:446px;width:337px;height:12px;border:1px solid #9a9a9a;border-radius:2px;background:linear-gradient(#f4f4f4,#cfcfcf)"></div>
<div class="a" style="left:637px;top:449px;width:6px;height:6px;background:repeating-linear-gradient(90deg,#555 0,#555 1px,transparent 1px,transparent 2px)"></div>
<div class="a" style="left:790px;top:446px;border:4px solid transparent;border-top:6px solid #18c8d8"></div><div class="a" style="left:793.500px;top:450px;width:1px;height:8px;background:#18c8d8"></div>
<svg class="a" style="left:0;top:0;pointer-events:none" width="1268" height="806" viewBox="0 0 1268 806">
<rect x="410" y="151" width="413" height="150" fill="#000"/>
<rect x="410" y="307.5" width="413" height="137.500" fill="#000"/>
<path d="M459.3 155 V298 M474.7 155 V298 M490.1 155 V298 M505.5 155 V298 M520.9 155 V298 M536.3 155 V298 M551.7 155 V298 M567.1 155 V298 M582.5 155 V298 M597.9 155 V298 M613.3 155 V298 M628.7 155 V298 M644.1 155 V298 M659.5 155 V298 M674.9 155 V298 M690.3 155 V298 M705.7 155 V298 M721.1 155 V298 M736.5 155 V298 M751.9 155 V298 M767.3 155 V298 M782.7 155 V298 M798.1 155 V298 M813.5 155 V298 M459 170.3 H822 M459 187.9 H822 M459 205.6 H822 M459 223.3 H822 M459 241.0 H822 M459 258.7 H822 M459 276.4 H822 M459 294.0 H822" stroke="#0a5c0a" stroke-width="1" stroke-dasharray="2 2" fill="none"/>
<path d="M459.3 311 V426 M474.7 311 V426 M490.1 311 V426 M505.5 311 V426 M520.9 311 V426 M536.3 311 V426 M551.7 311 V426 M567.1 311 V426 M582.5 311 V426 M597.9 311 V426 M613.3 311 V426 M628.7 311 V426 M644.1 311 V426 M659.5 311 V426 M674.9 311 V426 M690.3 311 V426 M705.7 311 V426 M721.1 311 V426 M736.5 311 V426 M751.9 311 V426 M767.3 311 V426 M782.7 311 V426 M798.1 311 V426 M813.5 311 V426 M459 311.7 H822 M459 334.4 H822 M459 357.2 H822 M459 379.8 H822 M459 402.7 H822 M459 425.0 H822" stroke="#0a5c0a" stroke-width="1" stroke-dasharray="2 2" fill="none"/>
<rect x="455" y="155" width="2.300" height="143" fill="#ff0000"/><rect x="457.300" y="155" width="1" height="143" fill="#909090"/>
<path d="M451 170.3 H455 M452.5 188.0 H455 M451 205.6 H455 M452.5 223.3 H455 M451 241.0 H455 M452.5 258.7 H455 M451 276.4 H455 M452.5 294.0 H455" stroke="#ff0000" stroke-width="1"/>
<text x="450" y="173.9" text-anchor="end" font-size="10" fill="#cc0000" font-family="Liberation Sans" letter-spacing="0">20</text>
<text x="450" y="209.2" text-anchor="end" font-size="10" fill="#cc0000" font-family="Liberation Sans" letter-spacing="0">15</text>
<text x="450" y="244.6" text-anchor="end" font-size="10" fill="#cc0000" font-family="Liberation Sans" letter-spacing="0">10</text>
<text x="450" y="280.0" text-anchor="end" font-size="10" fill="#cc0000" font-family="Liberation Sans" letter-spacing="0">5</text>
<text transform="translate(431.800 207) rotate(-90)" text-anchor="middle" font-size="9.500" fill="#cc0000" font-family="Liberation Sans" letter-spacing="-0.2">Achse 1 - [Pressure [bar]]</text>
<rect x="455" y="311" width="2.300" height="115" fill="#00ee00"/><rect x="457.300" y="311" width="1" height="115" fill="#909090"/>
<path d="M451 311.7 H455 M452.5 334.4 H455 M451 357.2 H455 M452.5 379.8 H455 M451 402.7 H455 M451 425.4 H455" stroke="#00ee00" stroke-width="1"/>
<text x="450" y="318.2" text-anchor="end" font-size="10" fill="#00e000" font-family="Liberation Sans" letter-spacing="0">600</text>
<text x="450" y="360.8" text-anchor="end" font-size="10" fill="#00e000" font-family="Liberation Sans" letter-spacing="0">400</text>
<text x="450" y="406.3" text-anchor="end" font-size="10" fill="#00e000" font-family="Liberation Sans" letter-spacing="0">200</text>
<text transform="translate(427.300 366) rotate(-90)" text-anchor="middle" font-size="9.500" fill="#00d800" font-family="Liberation Sans" letter-spacing="-0.18">Achse 2 - [Enthalpy [kJ/kg]]</text>
<path d="M459 427 H822 M459.3 427 V437.5 M474.7 427 V431.5 M490.1 427 V431.5 M505.5 427 V431.5 M520.9 427 V431.5 M536.3 427 V437.5 M551.7 427 V431.5 M567.1 427 V431.5 M582.5 427 V431.5 M597.9 427 V431.5 M613.3 427 V437.5 M628.7 427 V431.5 M644.1 427 V431.5 M659.5 427 V431.5 M674.9 427 V431.5 M690.3 427 V437.5 M705.7 427 V431.5 M721.1 427 V431.5 M736.5 427 V431.5 M751.9 427 V431.5 M767.3 427 V437.5 M782.7 427 V431.5 M798.1 427 V431.5 M813.5 427 V431.5" stroke="#f0f0f0" stroke-width="1" fill="none"/>
<text x="460.8" y="441.300" font-size="9.500" fill="#e8e8e8" font-family="Liberation Sans" letter-spacing="0">0s</text>
<text x="537.8" y="441.300" font-size="9.500" fill="#e8e8e8" font-family="Liberation Sans" letter-spacing="0">5s</text>
<text x="614.8" y="441.300" font-size="9.500" fill="#e8e8e8" font-family="Liberation Sans" letter-spacing="0">10s</text>
<text x="691.8" y="441.300" font-size="9.500" fill="#e8e8e8" font-family="Liberation Sans" letter-spacing="0">15s</text>
<text x="768.8" y="441.300" font-size="9.500" fill="#e8e8e8" font-family="Liberation Sans" letter-spacing="0">20s</text>
<path d="M459.3 229.0 C459.5 225.2 460.0 212.1 460.6 206.0 C461.2 199.9 462.2 196.2 463.1 192.5 C464.0 188.8 464.9 186.2 466.0 183.8 C467.1 181.4 468.5 179.2 470.0 178.0 C471.5 176.8 473.4 176.6 474.8 176.4 C476.2 176.2 477.3 176.2 478.6 177.0 C479.9 177.8 481.1 179.0 482.5 180.9 C483.9 182.8 485.5 186.3 487.3 188.6 C489.1 190.8 491.0 192.8 493.1 194.4 C495.2 196.0 496.7 196.9 499.9 197.9 C503.1 198.9 507.8 199.5 512.5 200.2 C517.2 200.8 522.9 201.5 528.0 201.8 C533.1 202.1 537.6 202.3 543.4 202.2 C549.2 202.1 557.0 201.7 562.8 201.4 C568.6 201.1 573.8 200.5 578.3 200.2 C582.8 199.9 588.0 199.5 589.9 199.4" stroke="#2a9be0" stroke-width="1.200" fill="none"/>
<path d="M459.3 229.3 C459.4 225.4 459.7 212.1 460.2 206.0 C460.7 199.9 461.2 197.0 462.2 192.5 C463.2 188.0 464.7 182.2 466.0 179.0 C467.3 175.8 468.5 174.3 470.0 173.0 C471.5 171.7 473.2 171.3 474.8 171.2 C476.4 171.1 478.2 171.4 479.6 172.2 C481.1 173.0 482.2 174.2 483.5 176.0 C484.8 177.8 485.7 180.9 487.3 182.8 C488.9 184.8 490.8 186.2 493.1 187.7 C495.4 189.1 497.7 190.4 500.9 191.5 C504.1 192.6 508.6 193.6 512.5 194.4 C516.4 195.2 519.0 195.8 524.1 196.4 C529.2 197.1 537.0 197.9 543.4 198.3 C549.8 198.7 555.0 198.8 562.8 198.9 C570.5 199.1 583.4 199.0 589.9 199.2 C596.4 199.4 593.6 199.4 601.5 199.9 C609.4 200.4 620.1 201.3 637.4 201.9 C654.7 202.5 682.6 203.1 705.2 203.6 C727.8 204.1 756.3 204.5 773.0 204.9 C789.7 205.3 799.8 205.8 805.2 206.0" stroke="#fff" stroke-width="2.200" fill="none" stroke-linejoin="round"/>
<path d="M459.3 258.3 C459.5 259.5 459.5 264.5 460.6 265.5 C461.7 266.5 463.8 264.2 466.0 264.1 C468.2 264.0 470.6 264.5 473.8 265.1 C477.0 265.8 480.2 266.8 485.4 268.0 C490.6 269.2 498.4 271.0 504.8 272.4 C511.2 273.8 517.7 275.0 524.1 276.1 C530.5 277.2 537.0 278.3 543.4 279.2 C549.8 280.1 556.3 280.9 562.8 281.5 C569.2 282.1 575.6 282.4 582.1 282.9 C588.6 283.3 593.9 283.8 601.5 284.2 C609.1 284.6 610.7 284.8 628.0 285.4 C645.3 286.0 675.7 287.2 705.2 287.7 C734.7 288.2 788.5 288.3 805.2 288.4" stroke="#e8820c" stroke-width="1.100" fill="none"/>
<path d="M459.3 255.4 C459.4 256.1 457.8 259.2 460.2 259.8 C462.6 260.4 469.6 258.9 473.8 259.3 C478.0 259.7 480.2 261.0 485.4 262.2 C490.6 263.4 498.4 264.9 504.8 266.4 C511.2 267.8 517.7 269.5 524.1 270.9 C530.5 272.3 537.0 273.5 543.4 274.7 C549.8 275.9 556.3 276.9 562.8 277.8 C569.2 278.7 575.6 279.2 582.1 279.8 C588.6 280.4 592.3 280.9 601.5 281.5 C610.7 282.1 620.1 283.0 637.4 283.6 C654.7 284.2 682.6 284.9 705.2 285.3 C727.8 285.8 756.3 286.0 773.0 286.3 C789.7 286.6 799.8 286.9 805.2 287.0" stroke="#d80000" stroke-width="1.200" fill="none"/>
<path d="M459.3 389.1 L466.0 386.8 L475.7 386.6 L497.0 388.2 L524.1 389.7 L562.8 391.1 L601.5 391.5 L613.1 389.7 L623.8 388.3 L718.8 388.3 L722.0 389.6 L805.2 389.6" stroke="#d010d0" stroke-width="1.100" fill="none"/>
<path d="M459.3 358.2 C459.5 357.0 459.5 352.0 460.6 351.0 C461.7 350.0 463.5 351.6 466.0 352.0 C468.5 352.4 473.3 352.7 475.7 353.3 C478.1 353.9 479.2 354.7 480.6 355.9 C482.1 357.1 482.9 359.3 484.4 360.5 C485.8 361.7 487.2 362.2 489.3 363.0 C491.4 363.8 494.4 364.6 497.0 365.0 C499.6 365.4 498.4 365.4 504.8 365.5 C511.2 365.6 526.7 365.8 535.7 365.5 C544.7 365.2 552.1 364.3 558.9 363.6 C565.7 362.9 572.4 362.0 576.3 361.1 C580.2 360.2 579.8 358.9 582.1 358.2 C584.4 357.4 582.2 357.2 589.9 356.6 C597.5 356.0 592.1 355.1 628.0 354.7 C663.9 354.3 775.7 354.4 805.2 354.3" stroke="#e0e0e0" stroke-width="1.100" fill="none"/>
<path d="M459.3 367.9 C459.4 364.5 459.7 351.4 460.2 347.5 C460.7 343.6 461.2 344.9 462.2 344.6 C463.2 344.4 463.8 345.7 466.0 346.0 C468.2 346.3 473.3 346.1 475.7 346.6 C478.1 347.1 479.2 347.4 480.6 348.9 C482.1 350.3 482.9 353.8 484.4 355.3 C485.8 356.9 487.2 357.3 489.3 358.2 C491.4 359.1 494.4 360.0 497.0 360.5 C499.6 361.0 499.6 361.0 504.8 361.1 C510.0 361.2 521.6 361.3 528.0 361.1 C534.4 360.9 538.2 360.4 543.4 359.7 C548.5 359.0 554.0 358.0 558.9 357.2 C563.8 356.4 568.6 355.8 572.5 354.7 C576.4 353.6 579.5 351.4 582.1 350.4 C584.7 349.4 584.8 349.1 588.0 348.5 C591.2 347.9 595.0 347.7 601.5 347.0 C608.0 346.3 593.2 344.9 627.2 344.5 C661.2 344.1 775.5 344.5 805.2 344.5" stroke="#ff8410" stroke-width="2.600" fill="none" stroke-linejoin="round"/>
<path d="M805.200 155 V298 M805.200 311 V426" stroke="#14b8c8" stroke-width="1.100"/>
<path d="M801.700 155.500h7l-3.500 6z M801.700 311.500h7l-3.500 6z" stroke="#14b8c8" stroke-width="1" fill="none"/>
</svg>
<svg class="a" style="left:833px;top:135px" width="13" height="13" viewBox="0 0 13 13"><rect x="1.500" y=".5" width="9" height="7" fill="#e9eefb" stroke="#2a3a90" stroke-width=".9"/><rect x="1.500" y=".5" width="9" height="2" fill="#2a3a90"/><path d="M.5 12l2-4h8l2 4z" fill="#3a4ab0" stroke="#1a2a70" stroke-width=".6"/><path d="M3 10h7" stroke="#cfd6f5" stroke-width=".8"/></svg>
<div class="wt" style="left:854px;top:136px">[3] StateChart</div>
<div class="wb" style="left:1227px;top:137px;width:10px;height:10px"></div><div class="wb" style="left:1238.6px;top:137px;width:10px;height:10px"></div><div class="wb" style="left:1250.2px;top:137px;width:10px;height:10px"></div><div class="a" style="left:1229.5px;top:143px;width:5px;height:2px;background:#7a808a"></div><div class="a" style="left:1241.6px;top:141px;width:4px;height:4px;border:1px solid #7a808a"></div><div class="a" style="left:1243.6px;top:139px;width:4px;height:4px;border:1px solid #7a808a;border-bottom:none;border-left:none"></div><svg class="a" style="left:1251.8px;top:139px" width="7" height="7"><path d="M1 1l5 5M6 1l-5 5" stroke="#7a808a" stroke-width="1.300"/></svg>
<svg class="a" style="left:0;top:0" width="1268" height="806" viewBox="0 0 1268 806">
<defs><clipPath id="pc"><rect x="873.600" y="173.600" width="372" height="242.400"/></clipPath></defs>
<rect x="830.500" y="149" width="431.500" height="311.700" fill="#272727"/>
<path d="M873.6 173.600 V416 M914.9 173.600 V416 M956.3 173.600 V416 M997.6 173.600 V416 M1038.9 173.600 V416 M1080.3 173.600 V416 M1121.6 173.600 V416 M1162.9 173.600 V416 M1204.3 173.600 V416 M1245.6 173.600 V416 M873.600 416.0 H1245.600 M873.600 348.5 H1245.600 M873.600 319.5 H1245.600 M873.600 300.7 H1245.600 M873.600 291.9 H1245.600 M873.600 224.5 H1245.600 M873.600 195.4 H1245.600 M873.600 176.7 H1245.600 M873.600 173.6 H1245.600" stroke="#7d7d7d" stroke-width="1.200" fill="none"/>
<g clip-path="url(#pc)" fill="none">
<path d="M885.7 173.6 L884.3 208.2 L883.5 242.8 L883.2 277.5 L883.0 312.1 L882.9 346.7 L882.8 381.4 L882.8 416.0 M906.2 173.6 L905.1 202.9 L904.6 232.1 L904.3 261.4 L904.1 290.7 L904.0 319.9 L904.0 349.2 L903.9 378.5 L903.9 378.5 L1074.2 378.5 L1074.3 380.1 L1074.5 381.7 L1074.6 383.3 L1074.8 384.9 L1074.9 386.5 L1075.0 388.2 L1075.1 389.8 L1075.2 391.4 L1075.4 393.0 L1075.5 394.6 L1075.6 396.2 L1075.7 397.8 L1075.8 399.4 L1075.9 401.0 L1076.0 402.7 L1076.1 404.3 L1076.2 405.9 L1076.2 407.5 L1076.3 409.1 L1076.4 410.7 L1076.5 412.3 L1076.6 413.9 L1076.6 415.5 L1076.7 417.2 L1076.8 418.8 M927.4 173.6 L926.8 197.3 L926.5 220.9 L926.3 244.6 L926.2 268.3 L926.2 292.0 L926.2 315.7 L926.2 339.4 L926.2 339.4 L1083.8 339.4 L1084.3 342.6 L1084.8 345.7 L1085.2 348.9 L1085.6 352.1 L1086.0 355.3 L1086.4 358.4 L1086.7 361.6 L1087.0 364.8 L1087.3 368.0 L1087.6 371.1 L1087.9 374.3 L1088.1 377.5 L1088.3 380.7 L1088.6 383.8 L1088.8 387.0 L1088.9 390.2 L1089.1 393.4 L1089.3 396.5 L1089.5 399.7 L1089.6 402.9 L1089.7 406.1 L1089.9 409.2 L1090.0 412.4 L1090.1 415.6 L1090.2 418.8 M949.0 173.6 L948.9 192.5 L949.0 211.4 L949.1 230.3 L949.2 249.3 L949.3 268.2 L949.4 287.1 L949.4 306.0 L949.4 306.0 L1092.5 306.0 L1093.7 310.5 L1094.7 315.0 L1095.7 319.5 L1096.6 324.1 L1097.3 328.6 L1098.0 333.1 L1098.7 337.6 L1099.3 342.1 L1099.8 346.6 L1100.3 351.1 L1100.7 355.6 L1101.1 360.1 L1101.5 364.6 L1101.9 369.2 L1102.2 373.7 L1102.5 378.2 L1102.7 382.7 L1103.0 387.2 L1103.2 391.7 L1103.4 396.2 L1103.6 400.7 L1103.7 405.2 L1103.9 409.7 L1104.0 414.3 L1104.2 418.8 M971.2 173.6 L971.6 188.4 L972.1 203.1 L972.6 217.9 L973.0 232.7 L973.5 247.5 L973.8 262.3 L974.1 277.1 L974.1 277.1 L1099.7 277.1 L1102.1 282.7 L1104.2 288.4 L1106.0 294.1 L1107.5 299.7 L1108.9 305.4 L1110.0 311.1 L1111.1 316.8 L1112.0 322.4 L1112.9 328.1 L1113.6 333.8 L1114.2 339.4 L1114.8 345.1 L1115.3 350.8 L1115.8 356.4 L1116.2 362.1 L1116.6 367.8 L1116.9 373.4 L1117.2 379.1 L1117.5 384.8 L1117.7 390.4 L1117.9 396.1 L1118.1 401.8 L1118.3 407.4 L1118.5 413.1 L1118.6 418.8 M993.7 173.6 L994.7 184.7 L995.7 195.9 L996.8 207.0 L997.9 218.1 L999.0 229.3 L1000.1 240.4 L1001.1 251.5 L1001.1 251.5 L1104.0 251.5 L1109.1 258.2 L1112.9 264.9 L1115.9 271.6 L1118.5 278.3 L1120.6 285.0 L1122.4 291.7 L1124.0 298.4 L1125.3 305.1 L1126.5 311.7 L1127.5 318.4 L1128.3 325.1 L1129.1 331.8 L1129.8 338.5 L1130.4 345.2 L1130.9 351.9 L1131.3 358.6 L1131.7 365.3 L1132.1 371.9 L1132.4 378.6 L1132.6 385.3 L1132.9 392.0 L1133.1 398.7 L1133.3 405.4 L1133.4 412.1 L1133.6 418.8 M1015.6 173.6 L1017.2 181.4 L1018.9 189.3 L1020.9 197.1 L1023.1 205.0 L1025.7 212.8 L1028.9 220.7 L1033.1 228.5 L1033.1 228.5 L1101.3 228.5 L1113.4 236.2 L1120.3 243.8 L1125.4 251.4 L1129.3 259.0 L1132.5 266.6 L1135.1 274.2 L1137.3 281.8 L1139.1 289.4 L1140.6 297.0 L1141.9 304.6 L1143.0 312.2 L1144.0 319.9 L1144.8 327.5 L1145.5 335.1 L1146.1 342.7 L1146.6 350.3 L1147.1 357.9 L1147.4 365.5 L1147.8 373.1 L1148.1 380.7 L1148.3 388.3 L1148.5 395.9 L1148.7 403.5 L1148.9 411.2 L1149.0 418.8 M1054.4 172.4 L1056.1 176.6 L1058.0 180.7 L1060.2 184.9 L1062.7 189.1 L1065.8 193.3 L1069.6 197.4 L1075.0 201.6 L1084.2 205.8 L1102.0 210.0 L1114.7 214.1 L1122.5 218.3 L1128.1 222.5 L1132.5 226.7 L1136.1 230.9 L1139.1 235.0 L1141.7 239.2 L1144.0 243.4 L1146.0 247.6 L1147.8 251.7 L1149.4 255.9 L1150.8 260.1 L1152.1 264.3 L1153.2 268.4 L1154.3 272.6 L1155.2 276.8 L1156.1 281.0 L1156.9 285.1 L1157.6 289.3 L1158.2 293.5 L1158.8 297.7 L1159.4 301.8 L1159.9 306.0 L1160.3 310.2 L1160.8 314.4 L1161.2 318.5 L1161.5 322.7 L1161.8 326.9 L1162.1 331.1 L1162.4 335.2 L1162.7 339.4 L1162.9 343.6 L1163.1 347.8 L1163.3 352.0 L1163.5 356.1 L1163.7 360.3 L1163.9 364.5 L1164.0 368.7 L1164.1 372.8 L1164.3 377.0 L1164.4 381.2 L1164.5 385.4 L1164.6 389.5 L1164.7 393.7 L1164.8 397.9 L1164.8 402.1 L1164.9 406.2 L1165.0 410.4 L1165.0 414.6 L1165.1 418.8 M1087.1 172.4 L1090.5 176.6 L1094.5 180.7 L1099.4 184.9 L1105.4 189.1 L1112.7 193.3 L1120.5 197.4 L1127.9 201.6 L1134.3 205.8 L1139.8 210.0 L1144.3 214.1 L1148.2 218.3 L1151.6 222.5 L1154.5 226.7 L1157.1 230.9 L1159.4 235.0 L1161.4 239.2 L1163.2 243.4 L1164.8 247.6 L1166.3 251.7 L1167.6 255.9 L1168.8 260.1 L1169.9 264.3 L1170.9 268.4 L1171.8 272.6 L1172.7 276.8 L1173.4 281.0 L1174.1 285.1 L1174.7 289.3 L1175.3 293.5 L1175.9 297.7 L1176.3 301.8 L1176.8 306.0 L1177.2 310.2 L1177.6 314.4 L1177.9 318.5 L1178.3 322.7 L1178.6 326.9 L1178.8 331.1 L1179.1 335.2 L1179.3 339.4 L1179.5 343.6 L1179.7 347.8 L1179.9 352.0 L1180.1 356.1 L1180.2 360.3 L1180.4 364.5 L1180.5 368.7 L1180.6 372.8 L1180.8 377.0 L1180.9 381.2 L1181.0 385.4 L1181.1 389.5 L1181.1 393.7 L1181.2 397.9 L1181.3 402.1 L1181.4 406.2 L1181.4 410.4 L1181.5 414.6 L1181.5 418.8 M1121.0 172.4 L1125.7 176.6 L1130.8 180.7 L1136.3 184.9 L1141.9 189.1 L1147.2 193.3 L1152.2 197.4 L1156.6 201.6 L1160.7 205.8 L1164.2 210.0 L1167.4 214.1 L1170.3 218.3 L1172.8 222.5 L1175.1 226.7 L1177.2 230.9 L1179.0 235.0 L1180.7 239.2 L1182.2 243.4 L1183.6 247.6 L1184.9 251.7 L1186.0 255.9 L1187.1 260.1 L1188.0 264.3 L1188.9 268.4 L1189.7 272.6 L1190.4 276.8 L1191.1 281.0 L1191.7 285.1 L1192.3 289.3 L1192.8 293.5 L1193.3 297.7 L1193.7 301.8 L1194.1 306.0 L1194.5 310.2 L1194.9 314.4 L1195.2 318.5 L1195.5 322.7 L1195.7 326.9 L1196.0 331.1 L1196.2 335.2 L1196.4 339.4 L1196.6 343.6 L1196.8 347.8 L1197.0 352.0 L1197.1 356.1 L1197.3 360.3 L1197.4 364.5 L1197.5 368.7 L1197.6 372.8 L1197.7 377.0 L1197.8 381.2 L1197.9 385.4 L1198.0 389.5 L1198.1 393.7 L1198.2 397.9 L1198.2 402.1 L1198.3 406.2 L1198.3 410.4 L1198.4 414.6 L1198.4 418.8 M1152.1 172.4 L1156.5 176.6 L1161.0 180.7 L1165.4 184.9 L1169.7 189.1 L1173.6 193.3 L1177.3 197.4 L1180.6 201.6 L1183.7 205.8 L1186.5 210.0 L1189.0 214.1 L1191.3 218.3 L1193.4 222.5 L1195.3 226.7 L1197.0 230.9 L1198.6 235.0 L1200.0 239.2 L1201.3 243.4 L1202.5 247.6 L1203.6 251.7 L1204.6 255.9 L1205.6 260.1 L1206.4 264.3 L1207.2 268.4 L1207.9 272.6 L1208.6 276.8 L1209.2 281.0 L1209.7 285.1 L1210.2 289.3 L1210.7 293.5 L1211.1 297.7 L1211.5 301.8 L1211.9 306.0 L1212.2 310.2 L1212.6 314.4 L1212.9 318.5 L1213.1 322.7 L1213.4 326.9 L1213.6 331.1 L1213.8 335.2 L1214.0 339.4 L1214.2 343.6 L1214.3 347.8 L1214.5 352.0 L1214.6 356.1 L1214.8 360.3 L1214.9 364.5 L1215.0 368.7 L1215.1 372.8 L1215.2 377.0 L1215.3 381.2 L1215.4 385.4 L1215.4 389.5 L1215.5 393.7 L1215.6 397.9 L1215.6 402.1 L1215.7 406.2 L1215.7 410.4 L1215.8 414.6 L1215.8 418.8 M1179.7 172.4 L1183.5 176.6 L1187.2 180.7 L1190.8 184.9 L1194.2 189.1 L1197.4 193.3 L1200.3 197.4 L1203.0 201.6 L1205.6 205.8 L1207.9 210.0 L1210.0 214.1 L1211.9 218.3 L1213.7 222.5 L1215.3 226.7 L1216.8 230.9 L1218.2 235.0 L1219.5 239.2 L1220.6 243.4 L1221.7 247.6 L1222.6 251.7 L1223.5 255.9 L1224.4 260.1 L1225.1 264.3 L1225.8 268.4 L1226.5 272.6 L1227.1 276.8 L1227.6 281.0 L1228.1 285.1 L1228.6 289.3 L1229.0 293.5 L1229.4 297.7 L1229.8 301.8 L1230.1 306.0 L1230.4 310.2 L1230.7 314.4 L1231.0 318.5 L1231.2 322.7 L1231.4 326.9 L1231.6 331.1 L1231.8 335.2 L1232.0 339.4 L1232.2 343.6 L1232.3 347.8 L1232.5 352.0 L1232.6 356.1 L1232.7 360.3 L1232.8 364.5 L1232.9 368.7 L1233.0 372.8 L1233.1 377.0 L1233.2 381.2 L1233.3 385.4 L1233.3 389.5 L1233.4 393.7 L1233.5 397.9 L1233.5 402.1 L1233.6 406.2 L1233.6 410.4 L1233.6 414.6 L1233.7 418.8 M1205.1 172.4 L1208.4 176.6 L1211.5 180.7 L1214.5 184.9 L1217.4 189.1 L1220.0 193.3 L1222.5 197.4 L1224.8 201.6 L1227.0 205.8 L1229.0 210.0 L1230.8 214.1 L1232.5 218.3 L1234.0 222.5 L1235.4 226.7 L1236.8 230.9 L1238.0 235.0 L1239.1 239.2 L1240.1 243.4 L1241.1 247.6 L1241.9 251.7 L1242.7 255.9 L1243.5 260.1 L1244.2 264.3 L1244.8 268.4 L1245.4 272.6 L1245.9 276.8 L1246.4 281.0 L1246.9 285.1 L1247.3 289.3 L1247.7 293.5 L1248.0 297.7 L1248.4 301.8 L1248.7 306.0 L1249.0 310.2 L1249.2 314.4 L1249.5 318.5 L1249.7 322.7 L1249.9 326.9 L1250.1 331.1 L1250.3 335.2 L1250.4 339.4 L1250.6 343.6 L1250.7 347.8 L1250.9 352.0 L1251.0 356.1 L1251.1 360.3 L1251.2 364.5 L1251.3 368.7 L1251.4 372.8 L1251.4 377.0 L1251.5 381.2 L1251.6 385.4 L1251.7 389.5 L1251.7 393.7 L1251.8 397.9 L1251.8 402.1 L1251.9 406.2 L1251.9 410.4 L1252.0 414.6 L1252.0 418.8 M1229.3 172.4 L1232.1 176.6 L1234.9 180.7 L1237.5 184.9 L1239.9 189.1 L1242.2 193.3 L1244.4 197.4 L1246.4 201.6 L1248.2 205.8 L1250.0 210.0 L1251.6 214.1 L1253.1 218.3 L1254.4 222.5 L1255.7 226.7 L1256.9 230.9 L1258.0 235.0 L1259.0 239.2 L1259.9 243.4 L1260.7 247.6 L1261.5 251.7 L1262.3 255.9 L1262.9 260.1 L1263.5 264.3 L1264.1 268.4 L1264.7 272.6 L1265.1 276.8 L1265.6 281.0 L1266.0 285.1 L1266.4 289.3 L1266.8 293.5 L1267.1 297.7 L1267.4 301.8 L1267.7 306.0 L1267.9 310.2 L1268.2 314.4 L1268.4 318.5 L1268.6 322.7 L1268.8 326.9 L1269.0 331.1 L1269.1 335.2 L1269.3 339.4 L1269.4 343.6 L1269.5 347.8 L1269.7 352.0 L1269.8 356.1 L1269.9 360.3 L1270.0 364.5 L1270.1 368.7 L1270.1 372.8 L1270.2 377.0 L1270.3 381.2 L1270.3 385.4 L1270.4 389.5 L1270.5 393.7 L1270.5 397.9 L1270.6 402.1 L1270.6 406.2 L1270.6 410.4 L1270.7 414.6 L1270.7 418.8 M1252.8 172.4 L1255.3 176.6 L1257.7 180.7 L1260.0 184.9 L1262.2 189.1 L1264.2 193.3 L1266.1 197.4 L1267.9 201.6 L1269.5 205.8 L1271.0 210.0 L1272.5 214.1 L1273.8 218.3 L1275.0 222.5 L1276.2 226.7 L1277.2 230.9 L1278.2 235.0 L1279.1 239.2 L1279.9 243.4 L1280.7 247.6 L1281.4 251.7 L1282.1 255.9 L1282.7 260.1 L1283.3 264.3 L1283.8 268.4 L1284.3 272.6 L1284.7 276.8 L1285.1 281.0 L1285.5 285.1 L1285.9 289.3 L1286.2 293.5 L1286.5 297.7 L1286.8 301.8 L1287.0 306.0 L1287.3 310.2 L1287.5 314.4 L1287.7 318.5 L1287.9 322.7 L1288.1 326.9 L1288.2 331.1 L1288.4 335.2 L1288.5 339.4 L1288.7 343.6 L1288.8 347.8 L1288.9 352.0 L1289.0 356.1 L1289.1 360.3 L1289.2 364.5 L1289.3 368.7 L1289.3 372.8 L1289.4 377.0 L1289.5 381.2 L1289.5 385.4 L1289.6 389.5 L1289.6 393.7 L1289.7 397.9 L1289.7 402.1 L1289.8 406.2 L1289.8 410.4 L1289.8 414.6 L1289.9 418.8" stroke="#70262a" stroke-width=".9"/>
<path d="M875.2 173.6 L873.7 208.2 L872.9 242.8 L872.5 277.5 L872.3 312.1 L872.2 346.7 L872.1 381.4 L872.1 416.0 M895.7 173.6 L894.5 206.0 L893.8 238.5 L893.5 270.9 L893.3 303.4 L893.2 335.8 L893.2 368.3 L893.1 400.7 L893.1 400.7 L1069.2 400.7 L1069.2 401.5 L1069.2 402.2 L1069.3 402.9 L1069.3 403.6 L1069.4 404.3 L1069.4 405.1 L1069.5 405.8 L1069.5 406.5 L1069.6 407.2 L1069.6 408.0 L1069.7 408.7 L1069.7 409.4 L1069.7 410.1 L1069.8 410.8 L1069.8 411.6 L1069.9 412.3 L1069.9 413.0 L1069.9 413.7 L1070.0 414.4 L1070.0 415.2 L1070.0 415.9 L1070.1 416.6 L1070.1 417.3 L1070.2 418.0 L1070.2 418.8 M916.7 173.6 L915.9 199.9 L915.5 226.3 L915.2 252.7 L915.1 279.0 L915.0 305.4 L915.0 331.8 L914.9 358.1 L914.9 358.1 L1079.1 358.1 L1079.4 360.5 L1079.7 363.0 L1079.9 365.4 L1080.2 367.8 L1080.4 370.3 L1080.7 372.7 L1080.9 375.1 L1081.1 377.5 L1081.3 380.0 L1081.5 382.4 L1081.6 384.8 L1081.8 387.2 L1082.0 389.7 L1082.1 392.1 L1082.3 394.5 L1082.4 396.9 L1082.6 399.4 L1082.7 401.8 L1082.8 404.2 L1082.9 406.6 L1083.0 409.1 L1083.2 411.5 L1083.3 413.9 L1083.4 416.3 L1083.4 418.8 M938.1 173.6 L937.8 194.8 L937.7 216.0 L937.6 237.2 L937.6 258.4 L937.6 279.6 L937.6 300.9 L937.6 322.1 L937.6 322.1 L1088.3 322.1 L1089.1 325.9 L1089.8 329.8 L1090.5 333.7 L1091.1 337.5 L1091.7 341.4 L1092.2 345.3 L1092.6 349.1 L1093.1 353.0 L1093.5 356.9 L1093.9 360.7 L1094.2 364.6 L1094.6 368.5 L1094.9 372.4 L1095.1 376.2 L1095.4 380.1 L1095.6 384.0 L1095.8 387.8 L1096.1 391.7 L1096.2 395.6 L1096.4 399.4 L1096.6 403.3 L1096.7 407.2 L1096.9 411.0 L1097.0 414.9 L1097.1 418.8 M960.1 173.6 L960.2 190.4 L960.5 207.1 L960.7 223.9 L961.0 240.7 L961.2 257.5 L961.4 274.3 L961.6 291.1 L961.6 291.1 L1096.3 291.1 L1098.0 296.2 L1099.5 301.3 L1100.9 306.4 L1102.0 311.5 L1103.1 316.6 L1104.0 321.7 L1104.8 326.8 L1105.6 331.9 L1106.3 337.0 L1106.9 342.1 L1107.4 347.3 L1107.9 352.4 L1108.4 357.5 L1108.8 362.6 L1109.1 367.7 L1109.4 372.8 L1109.7 377.9 L1110.0 383.0 L1110.3 388.1 L1110.5 393.2 L1110.7 398.3 L1110.9 403.4 L1111.0 408.5 L1111.2 413.7 L1111.3 418.8 M982.4 173.6 L983.1 186.5 L983.9 199.4 L984.6 212.3 L985.4 225.2 L986.1 238.1 L986.7 251.0 L987.3 263.9 L987.3 263.9 L1102.3 263.9 L1105.8 270.1 L1108.6 276.3 L1111.0 282.5 L1113.0 288.7 L1114.7 294.9 L1116.2 301.1 L1117.5 307.3 L1118.6 313.5 L1119.6 319.7 L1120.5 325.9 L1121.2 332.1 L1121.9 338.3 L1122.5 344.4 L1123.0 350.6 L1123.5 356.8 L1123.9 363.0 L1124.2 369.2 L1124.6 375.4 L1124.9 381.6 L1125.1 387.8 L1125.3 394.0 L1125.5 400.2 L1125.7 406.4 L1125.9 412.6 L1126.0 418.8 M1004.9 173.6 L1006.1 183.0 L1007.5 192.5 L1009.0 202.0 L1010.6 211.4 L1012.3 220.9 L1014.2 230.3 L1016.1 239.8 L1016.1 239.8 L1104.1 239.8 L1111.7 246.9 L1116.8 254.1 L1120.7 261.3 L1123.9 268.4 L1126.5 275.6 L1128.7 282.7 L1130.6 289.9 L1132.1 297.1 L1133.5 304.2 L1134.6 311.4 L1135.6 318.5 L1136.5 325.7 L1137.2 332.9 L1137.9 340.0 L1138.4 347.2 L1138.9 354.3 L1139.3 361.5 L1139.7 368.7 L1140.0 375.8 L1140.3 383.0 L1140.5 390.1 L1140.7 397.3 L1140.9 404.4 L1141.1 411.6 L1141.2 418.8 M1024.5 173.6 L1026.4 179.9 L1028.5 186.2 L1030.9 192.5 L1033.8 198.8 L1037.5 205.0 L1042.8 211.3 L1058.1 217.6 L1058.2 217.6 L1086.6 217.6 L1112.7 225.7 L1122.3 233.7 L1128.9 241.8 L1133.9 249.8 L1137.8 257.9 L1140.9 265.9 L1143.5 274.0 L1145.7 282.0 L1147.5 290.0 L1149.0 298.1 L1150.3 306.1 L1151.4 314.2 L1152.3 322.2 L1153.1 330.3 L1153.8 338.3 L1154.3 346.4 L1154.8 354.4 L1155.2 362.4 L1155.6 370.5 L1155.9 378.5 L1156.2 386.6 L1156.4 394.6 L1156.6 402.7 L1156.8 410.7 L1156.9 418.8 M1070.4 172.4 L1072.9 176.6 L1075.7 180.7 L1079.1 184.9 L1083.3 189.1 L1088.9 193.3 L1096.6 197.4 L1106.8 201.6 L1116.9 205.8 L1125.0 210.0 L1131.2 214.1 L1136.2 218.3 L1140.3 222.5 L1143.8 226.7 L1146.8 230.9 L1149.4 235.0 L1151.6 239.2 L1153.6 243.4 L1155.4 247.6 L1157.0 251.7 L1158.5 255.9 L1159.8 260.1 L1161.0 264.3 L1162.0 268.4 L1163.0 272.6 L1163.9 276.8 L1164.7 281.0 L1165.4 285.1 L1166.1 289.3 L1166.7 293.5 L1167.3 297.7 L1167.8 301.8 L1168.3 306.0 L1168.7 310.2 L1169.1 314.4 L1169.5 318.5 L1169.8 322.7 L1170.1 326.9 L1170.4 331.1 L1170.7 335.2 L1170.9 339.4 L1171.2 343.6 L1171.4 347.8 L1171.6 352.0 L1171.8 356.1 L1171.9 360.3 L1172.1 364.5 L1172.2 368.7 L1172.3 372.8 L1172.5 377.0 L1172.6 381.2 L1172.7 385.4 L1172.8 389.5 L1172.8 393.7 L1172.9 397.9 L1173.0 402.1 L1173.1 406.2 L1173.1 410.4 L1173.2 414.6 L1173.2 418.8 M1104.2 172.4 L1108.4 176.6 L1113.3 180.7 L1119.0 184.9 L1125.2 189.1 L1131.7 193.3 L1137.8 197.4 L1143.3 201.6 L1148.2 205.8 L1152.5 210.0 L1156.2 214.1 L1159.5 218.3 L1162.4 222.5 L1164.9 226.7 L1167.2 230.9 L1169.2 235.0 L1171.1 239.2 L1172.7 243.4 L1174.2 247.6 L1175.6 251.7 L1176.8 255.9 L1177.9 260.1 L1178.9 264.3 L1179.9 268.4 L1180.7 272.6 L1181.5 276.8 L1182.2 281.0 L1182.9 285.1 L1183.5 289.3 L1184.0 293.5 L1184.5 297.7 L1185.0 301.8 L1185.4 306.0 L1185.8 310.2 L1186.2 314.4 L1186.5 318.5 L1186.8 322.7 L1187.1 326.9 L1187.4 331.1 L1187.6 335.2 L1187.8 339.4 L1188.0 343.6 L1188.2 347.8 L1188.4 352.0 L1188.6 356.1 L1188.7 360.3 L1188.8 364.5 L1189.0 368.7 L1189.1 372.8 L1189.2 377.0 L1189.3 381.2 L1189.4 385.4 L1189.5 389.5 L1189.6 393.7 L1189.6 397.9 L1189.7 402.1 L1189.8 406.2 L1189.8 410.4 L1189.9 414.6 L1189.9 418.8 M1137.0 172.4 L1141.7 176.6 L1146.6 180.7 L1151.6 184.9 L1156.4 189.1 L1160.9 193.3 L1165.1 197.4 L1168.9 201.6 L1172.4 205.8 L1175.5 210.0 L1178.3 214.1 L1180.9 218.3 L1183.2 222.5 L1185.2 226.7 L1187.1 230.9 L1188.8 235.0 L1190.4 239.2 L1191.8 243.4 L1193.1 247.6 L1194.2 251.7 L1195.3 255.9 L1196.3 260.1 L1197.2 264.3 L1198.0 268.4 L1198.8 272.6 L1199.5 276.8 L1200.1 281.0 L1200.7 285.1 L1201.2 289.3 L1201.7 293.5 L1202.2 297.7 L1202.6 301.8 L1203.0 306.0 L1203.3 310.2 L1203.7 314.4 L1204.0 318.5 L1204.2 322.7 L1204.5 326.9 L1204.7 331.1 L1205.0 335.2 L1205.2 339.4 L1205.3 343.6 L1205.5 347.8 L1205.7 352.0 L1205.8 356.1 L1206.0 360.3 L1206.1 364.5 L1206.2 368.7 L1206.3 372.8 L1206.4 377.0 L1206.5 381.2 L1206.6 385.4 L1206.7 389.5 L1206.7 393.7 L1206.8 397.9 L1206.9 402.1 L1206.9 406.2 L1207.0 410.4 L1207.0 414.6 L1207.1 418.8 M1166.2 172.4 L1170.4 176.6 L1174.5 180.7 L1178.4 184.9 L1182.2 189.1 L1185.7 193.3 L1188.9 197.4 L1192.0 201.6 L1194.7 205.8 L1197.2 210.0 L1199.5 214.1 L1201.6 218.3 L1203.6 222.5 L1205.3 226.7 L1206.9 230.9 L1208.4 235.0 L1209.7 239.2 L1210.9 243.4 L1212.1 247.6 L1213.1 251.7 L1214.1 255.9 L1214.9 260.1 L1215.7 264.3 L1216.5 268.4 L1217.1 272.6 L1217.8 276.8 L1218.3 281.0 L1218.9 285.1 L1219.4 289.3 L1219.8 293.5 L1220.2 297.7 L1220.6 301.8 L1220.9 306.0 L1221.3 310.2 L1221.6 314.4 L1221.8 318.5 L1222.1 322.7 L1222.3 326.9 L1222.6 331.1 L1222.8 335.2 L1222.9 339.4 L1223.1 343.6 L1223.3 347.8 L1223.4 352.0 L1223.6 356.1 L1223.7 360.3 L1223.8 364.5 L1223.9 368.7 L1224.0 372.8 L1224.1 377.0 L1224.2 381.2 L1224.3 385.4 L1224.3 389.5 L1224.4 393.7 L1224.5 397.9 L1224.5 402.1 L1224.6 406.2 L1224.6 410.4 L1224.7 414.6 L1224.7 418.8 M1192.6 172.4 L1196.1 176.6 L1199.5 180.7 L1202.8 184.9 L1205.9 189.1 L1208.8 193.3 L1211.5 197.4 L1214.0 201.6 L1216.3 205.8 L1218.4 210.0 L1220.4 214.1 L1222.2 218.3 L1223.8 222.5 L1225.4 226.7 L1226.8 230.9 L1228.1 235.0 L1229.2 239.2 L1230.3 243.4 L1231.3 247.6 L1232.3 251.7 L1233.1 255.9 L1233.9 260.1 L1234.6 264.3 L1235.3 268.4 L1235.9 272.6 L1236.4 276.8 L1237.0 281.0 L1237.4 285.1 L1237.9 289.3 L1238.3 293.5 L1238.7 297.7 L1239.0 301.8 L1239.3 306.0 L1239.6 310.2 L1239.9 314.4 L1240.2 318.5 L1240.4 322.7 L1240.6 326.9 L1240.8 331.1 L1241.0 335.2 L1241.2 339.4 L1241.3 343.6 L1241.5 347.8 L1241.6 352.0 L1241.7 356.1 L1241.8 360.3 L1241.9 364.5 L1242.0 368.7 L1242.1 372.8 L1242.2 377.0 L1242.3 381.2 L1242.4 385.4 L1242.4 389.5 L1242.5 393.7 L1242.6 397.9 L1242.6 402.1 L1242.7 406.2 L1242.7 410.4 L1242.7 414.6 L1242.8 418.8 M1217.3 172.4 L1220.4 176.6 L1223.3 180.7 L1226.1 184.9 L1228.7 189.1 L1231.2 193.3 L1233.5 197.4 L1235.6 201.6 L1237.6 205.8 L1239.5 210.0 L1241.2 214.1 L1242.7 218.3 L1244.2 222.5 L1245.5 226.7 L1246.8 230.9 L1247.9 235.0 L1249.0 239.2 L1250.0 243.4 L1250.9 247.6 L1251.7 251.7 L1252.5 255.9 L1253.2 260.1 L1253.8 264.3 L1254.4 268.4 L1255.0 272.6 L1255.5 276.8 L1256.0 281.0 L1256.4 285.1 L1256.8 289.3 L1257.2 293.5 L1257.5 297.7 L1257.8 301.8 L1258.1 306.0 L1258.4 310.2 L1258.7 314.4 L1258.9 318.5 L1259.1 322.7 L1259.3 326.9 L1259.5 331.1 L1259.6 335.2 L1259.8 339.4 L1260.0 343.6 L1260.1 347.8 L1260.2 352.0 L1260.3 356.1 L1260.4 360.3 L1260.5 364.5 L1260.6 368.7 L1260.7 372.8 L1260.8 377.0 L1260.9 381.2 L1260.9 385.4 L1261.0 389.5 L1261.0 393.7 L1261.1 397.9 L1261.1 402.1 L1261.2 406.2 L1261.2 410.4 L1261.3 414.6 L1261.3 418.8 M1241.1 172.4 L1243.8 176.6 L1246.3 180.7 L1248.8 184.9 L1251.1 189.1 L1253.2 193.3 L1255.2 197.4 L1257.1 201.6 L1258.9 205.8 L1260.5 210.0 L1262.0 214.1 L1263.4 218.3 L1264.7 222.5 L1265.9 226.7 L1267.0 230.9 L1268.0 235.0 L1269.0 239.2 L1269.9 243.4 L1270.7 247.6 L1271.4 251.7 L1272.1 255.9 L1272.8 260.1 L1273.4 264.3 L1273.9 268.4 L1274.4 272.6 L1274.9 276.8 L1275.3 281.0 L1275.7 285.1 L1276.1 289.3 L1276.4 293.5 L1276.7 297.7 L1277.0 301.8 L1277.3 306.0 L1277.6 310.2 L1277.8 314.4 L1278.0 318.5 L1278.2 322.7 L1278.4 326.9 L1278.6 331.1 L1278.7 335.2 L1278.9 339.4 L1279.0 343.6 L1279.1 347.8 L1279.2 352.0 L1279.3 356.1 L1279.4 360.3 L1279.5 364.5 L1279.6 368.7 L1279.7 372.8 L1279.8 377.0 L1279.8 381.2 L1279.9 385.4 L1279.9 389.5 L1280.0 393.7 L1280.0 397.9 L1280.1 402.1 L1280.1 406.2 L1280.2 410.4 L1280.2 414.6 L1280.2 418.8" stroke="#a62e34" stroke-width="1.050"/>
<path d="M890.7 452.1 L894.7 441.4 L898.6 431.1 L902.5 421.2 L906.2 411.6 L910.0 402.4 L913.9 393.5 L917.9 385.0 L921.9 376.7 L925.8 368.7 L929.9 360.9 L933.9 353.4 L938.0 346.2 L942.1 339.1 L946.2 332.3 L950.4 325.7 L954.6 319.2 L958.8 313.0 L963.1 306.9 L967.4 301.0 L971.8 295.2 L976.2 289.6 L980.7 284.2 L985.2 278.8 L989.8 273.6 L994.4 268.5 L999.1 263.6 L1003.9 258.7 L1008.8 254.0 L1013.8 249.3 L1019.0 244.8 L1024.3 240.3 L1029.8 235.9 L1035.6 231.6 L1041.8 227.3 L1048.6 223.1 L1049.4 222.6 L1050.3 222.2 L1051.2 221.8 L1052.2 221.3 L1053.1 220.9 L1054.1 220.4 L1055.1 220.0 L1056.1 219.6 L1057.0 219.1 L1058.0 218.7 L1059.1 218.2 L1060.4 217.8 L1062.3 217.4 L1065.3 216.9 L1071.7 216.5 M909.4 452.1 L913.2 441.4 L916.9 431.1 L920.5 421.2 L924.1 411.6 L927.7 402.4 L931.3 393.5 L935.1 385.0 L938.8 376.7 L942.6 368.7 L946.4 360.9 L950.2 353.4 L954.0 346.2 L957.8 339.1 L961.7 332.3 L965.6 325.7 L969.5 319.2 L973.5 313.0 L977.5 306.9 L981.5 301.0 L985.5 295.2 L989.6 289.6 L993.7 284.2 L997.9 278.8 L1002.0 273.6 L1006.3 268.5 L1010.6 263.6 L1015.0 258.7 L1019.4 254.0 L1023.9 249.3 L1028.4 244.8 L1033.2 240.3 L1038.1 235.9 L1043.0 231.6 L1048.3 227.3 L1054.0 223.1 L1054.6 222.6 L1055.3 222.2 L1056.1 221.8 L1056.8 221.3 L1057.6 220.9 L1058.4 220.4 L1059.2 220.0 L1060.0 219.6 L1060.8 219.1 L1061.5 218.7 L1062.4 218.2 L1063.4 217.8 L1064.8 217.4 L1067.1 216.9 L1071.7 216.5 M928.1 452.1 L931.6 441.4 L935.1 431.1 L938.6 421.2 L941.9 411.6 L945.3 402.4 L948.8 393.5 L952.3 385.0 L955.8 376.7 L959.3 368.7 L962.9 360.9 L966.4 353.4 L970.0 346.2 L973.6 339.1 L977.2 332.3 L980.8 325.7 L984.5 319.2 L988.1 313.0 L991.8 306.9 L995.5 301.0 L999.2 295.2 L1003.0 289.6 L1006.7 284.2 L1010.5 278.8 L1014.3 273.6 L1018.2 268.5 L1022.1 263.6 L1026.0 258.7 L1029.9 254.0 L1033.9 249.3 L1037.9 244.8 L1042.0 240.3 L1046.3 235.9 L1050.5 231.6 L1054.9 227.3 L1059.3 223.1 L1059.8 222.6 L1060.4 222.2 L1060.9 221.8 L1061.5 221.3 L1062.1 220.9 L1062.7 220.4 L1063.3 220.0 L1063.9 219.6 L1064.5 219.1 L1065.0 218.7 L1065.6 218.2 L1066.4 217.8 L1067.4 217.4 L1068.8 216.9 L1071.7 216.5 M946.7 452.1 L950.1 441.4 L953.4 431.1 L956.6 421.2 L959.8 411.6 L963.0 402.4 L966.2 393.5 L969.5 385.0 L972.8 376.7 L976.1 368.7 L979.4 360.9 L982.7 353.4 L986.0 346.2 L989.4 339.1 L992.7 332.3 L996.1 325.7 L999.4 319.2 L1002.8 313.0 L1006.2 306.9 L1009.6 301.0 L1013.0 295.2 L1016.4 289.6 L1019.8 284.2 L1023.2 278.8 L1026.6 273.6 L1030.1 268.5 L1033.5 263.6 L1037.0 258.7 L1040.5 254.0 L1043.9 249.3 L1047.3 244.8 L1050.9 240.3 L1054.5 235.9 L1057.9 231.6 L1061.4 227.3 L1064.6 223.1 L1065.0 222.6 L1065.4 222.2 L1065.8 221.8 L1066.2 221.3 L1066.6 220.9 L1067.1 220.4 L1067.5 220.0 L1067.9 219.6 L1068.2 219.1 L1068.6 218.7 L1068.9 218.2 L1069.4 217.8 L1069.9 217.4 L1070.5 216.9 L1071.7 216.5 M965.4 452.1 L968.5 441.4 L971.6 431.1 L974.6 421.2 L977.6 411.6 L980.6 402.4 L983.6 393.5 L986.7 385.0 L989.8 376.7 L992.8 368.7 L995.9 360.9 L999.0 353.4 L1002.0 346.2 L1005.1 339.1 L1008.2 332.3 L1011.3 325.7 L1014.4 319.2 L1017.4 313.0 L1020.5 306.9 L1023.6 301.0 L1026.7 295.2 L1029.7 289.6 L1032.8 284.2 L1035.9 278.8 L1038.9 273.6 L1042.0 268.5 L1045.0 263.6 L1048.0 258.7 L1051.1 254.0 L1053.9 249.3 L1056.8 244.8 L1059.8 240.3 L1062.7 235.9 L1065.3 231.6 L1067.9 227.3 L1070.0 223.1 L1070.2 222.6 L1070.4 222.2 L1070.7 221.8 L1070.9 221.3 L1071.1 220.9 L1071.4 220.4 L1071.6 220.0 L1071.8 219.6 L1072.0 219.1 L1072.1 218.7 L1072.2 218.2 L1072.4 217.8 L1072.4 217.4 L1072.2 216.9 L1071.7 216.5 M984.1 452.1 L987.0 441.4 L989.8 431.1 L992.7 421.2 L995.4 411.6 L998.2 402.4 L1001.1 393.5 L1003.9 385.0 L1006.7 376.7 L1009.6 368.7 L1012.4 360.9 L1015.2 353.4 L1018.1 346.2 L1020.9 339.1 L1023.7 332.3 L1026.5 325.7 L1029.3 319.2 L1032.1 313.0 L1034.9 306.9 L1037.6 301.0 L1040.4 295.2 L1043.1 289.6 L1045.9 284.2 L1048.6 278.8 L1051.2 273.6 L1053.9 268.5 L1056.5 263.6 L1059.1 258.7 L1061.6 254.0 L1063.9 249.3 L1066.2 244.8 L1068.6 240.3 L1070.9 235.9 L1072.7 231.6 L1074.5 227.3 L1075.3 223.1 L1075.4 222.6 L1075.5 222.2 L1075.5 221.8 L1075.6 221.3 L1075.7 220.9 L1075.7 220.4 L1075.7 220.0 L1075.7 219.6 L1075.7 219.1 L1075.6 218.7 L1075.5 218.2 L1075.3 217.8 L1075.0 217.4 L1074.0 216.9 L1071.7 216.5 M1002.8 452.1 L1005.4 441.4 L1008.1 431.1 L1010.7 421.2 L1013.3 411.6 L1015.9 402.4 L1018.5 393.5 L1021.1 385.0 L1023.7 376.7 L1026.3 368.7 L1028.9 360.9 L1031.5 353.4 L1034.1 346.2 L1036.6 339.1 L1039.2 332.3 L1041.7 325.7 L1044.2 319.2 L1046.7 313.0 L1049.2 306.9 L1051.7 301.0 L1054.1 295.2 L1056.5 289.6 L1058.9 284.2 L1061.2 278.8 L1063.5 273.6 L1065.8 268.5 L1067.9 263.6 L1070.1 258.7 L1072.2 254.0 L1073.9 249.3 L1075.7 244.8 L1077.5 240.3 L1079.1 235.9 L1080.2 231.6 L1081.0 227.3 L1080.6 223.1 L1080.6 222.6 L1080.5 222.2 L1080.4 221.8 L1080.3 221.3 L1080.2 220.9 L1080.0 220.4 L1079.8 220.0 L1079.6 219.6 L1079.4 219.1 L1079.2 218.7 L1078.8 218.2 L1078.3 217.8 L1077.5 217.4 L1075.7 216.9 L1071.7 216.5 M1021.4 452.1 L1023.9 441.4 L1026.3 431.1 L1028.7 421.2 L1031.1 411.6 L1033.5 402.4 L1035.9 393.5 L1038.3 385.0 L1040.7 376.7 L1043.1 368.7 L1045.4 360.9 L1047.8 353.4 L1050.1 346.2 L1052.4 339.1 L1054.7 332.3 L1057.0 325.7 L1059.2 319.2 L1061.4 313.0 L1063.6 306.9 L1065.7 301.0 L1067.9 295.2 L1069.9 289.6 L1071.9 284.2 L1073.9 278.8 L1075.8 273.6 L1077.7 268.5 L1079.4 263.6 L1081.1 258.7 L1082.7 254.0 L1084.0 249.3 L1085.2 244.8 L1086.4 240.3 L1087.3 235.9 L1087.6 231.6 L1087.5 227.3 L1086.0 223.1 L1085.8 222.6 L1085.5 222.2 L1085.3 221.8 L1085.0 221.3 L1084.7 220.9 L1084.3 220.4 L1084.0 220.0 L1083.6 219.6 L1083.2 219.1 L1082.7 218.7 L1082.1 218.2 L1081.3 217.8 L1080.0 217.4 L1077.4 216.9 L1071.7 216.5 M1040.1 452.1 L1042.3 441.4 L1044.6 431.1 L1046.8 421.2 L1049.0 411.6 L1051.2 402.4 L1053.3 393.5 L1055.5 385.0 L1057.7 376.7 L1059.8 368.7 L1061.9 360.9 L1064.0 353.4 L1066.1 346.2 L1068.2 339.1 L1070.2 332.3 L1072.2 325.7 L1074.1 319.2 L1076.1 313.0 L1077.9 306.9 L1079.8 301.0 L1081.6 295.2 L1083.3 289.6 L1085.0 284.2 L1086.6 278.8 L1088.1 273.6 L1089.6 268.5 L1090.9 263.6 L1092.2 258.7 L1093.3 254.0 L1094.0 249.3 L1094.6 244.8 L1095.2 240.3 L1095.5 235.9 L1095.0 231.6 L1094.1 227.3 L1091.3 223.1 L1090.9 222.6 L1090.6 222.2 L1090.1 221.8 L1089.7 221.3 L1089.2 220.9 L1088.6 220.4 L1088.1 220.0 L1087.5 219.6 L1086.9 219.1 L1086.2 218.7 L1085.4 218.2 L1084.3 217.8 L1082.6 217.4 L1079.1 216.9 L1071.7 216.5" stroke="#5e686d" stroke-width=".9"/>
<path d="M872.1 452.1 L876.2 441.4 L880.4 431.1 L884.4 421.2 L888.4 411.6 L892.4 402.4 L896.5 393.5 L900.7 385.0 L904.9 376.7 L909.1 368.7 L913.4 360.9 L917.6 353.4 L922.0 346.2 L926.3 339.1 L930.7 332.3 L935.2 325.7 L939.6 319.2 L944.2 313.0 L948.7 306.9 L953.4 301.0 L958.1 295.2 L962.8 289.6 L967.6 284.2 L972.5 278.8 L977.5 273.6 L982.5 268.5 L987.7 263.6 L992.9 258.7 L998.3 254.0 L1003.8 249.3 L1009.5 244.8 L1015.4 240.3 L1021.6 235.9 L1028.2 231.6 L1035.2 227.3 L1043.3 223.1 L1044.3 222.6 L1045.3 222.2 L1046.4 221.8 L1047.5 221.3 L1048.6 220.9 L1049.8 220.4 L1051.0 220.0 L1052.2 219.6 L1053.3 219.1 L1054.4 218.7 L1055.8 218.2 L1057.5 217.8 L1059.8 217.4 L1063.6 216.9 L1071.7 216.5 L1071.7 216.5 L1080.9 216.9 L1085.1 217.4 L1087.3 217.8 L1088.7 218.2 L1089.8 218.7 L1090.6 219.1 L1091.4 219.6 L1092.2 220.0 L1093.0 220.4 L1093.7 220.9 L1094.4 221.3 L1095.0 221.8 L1095.6 222.2 L1096.1 222.6 L1096.6 223.1 L1100.6 227.3 L1102.5 231.6 L1103.7 235.9 L1104.1 240.3 L1104.1 244.8 L1104.0 249.3 L1103.8 254.0 L1103.2 258.7 L1102.3 263.6 L1101.5 268.5 L1100.4 273.6 L1099.3 278.8 L1098.0 284.2 L1096.7 289.6 L1095.3 295.2 L1093.8 301.0 L1092.3 306.9 L1090.7 313.0 L1089.1 319.2 L1087.4 325.7 L1085.7 332.3 L1083.9 339.1 L1082.1 346.2 L1080.3 353.4 L1078.4 360.9 L1076.5 368.7 L1074.6 376.7 L1072.7 385.0 L1070.8 393.5 L1068.8 402.4 L1066.8 411.6 L1064.8 421.2 L1062.8 431.1 L1060.8 441.4 L1058.8 452.1" stroke="#000" stroke-width="2.600" stroke-linejoin="round"/>
</g>
<rect x="873.600" y="173.600" width="372" height="242.400" fill="none" stroke="#8a8a8a" stroke-width="1.200"/>
<path d="M963.3 270.2 L1127.3 270.2 L1088.9 350.8 L963.3 346.3 Z" stroke="#f0ac0c" stroke-width="2" fill="none" stroke-linejoin="round"/>
<circle cx="963.3" cy="270.2" r="3.800" fill="#f0ac0c"/>
<circle cx="1127.3" cy="270.2" r="3.800" fill="#f0ac0c"/>
<circle cx="1088.9" cy="350.8" r="3.800" fill="#f0ac0c"/>
<circle cx="963.3" cy="346.3" r="3.800" fill="#f0ac0c"/>
<rect x="874.500" y="175" width="68" height="14" fill="#272727" stroke="#e6e6e6" stroke-width="1"/>
<text x="878" y="185.600" font-size="9.200" fill="#f2f2f2" font-family="Liberation Sans" letter-spacing="-0.5">TILMedia.R134a</text>
<text x="873.6" y="429.300" text-anchor="middle" font-size="9.300" fill="#dcdcdc" font-family="Liberation Sans" letter-spacing="-0.2">150</text>
<text x="914.9" y="429.300" text-anchor="middle" font-size="9.300" fill="#dcdcdc" font-family="Liberation Sans" letter-spacing="-0.2">200</text>
<text x="956.3" y="429.300" text-anchor="middle" font-size="9.300" fill="#dcdcdc" font-family="Liberation Sans" letter-spacing="-0.2">250</text>
<text x="997.6" y="429.300" text-anchor="middle" font-size="9.300" fill="#dcdcdc" font-family="Liberation Sans" letter-spacing="-0.2">300</text>
<text x="1038.9" y="429.300" text-anchor="middle" font-size="9.300" fill="#dcdcdc" font-family="Liberation Sans" letter-spacing="-0.2">350</text>
<text x="1080.3" y="429.300" text-anchor="middle" font-size="9.300" fill="#dcdcdc" font-family="Liberation Sans" letter-spacing="-0.2">400</text>
<text x="1121.6" y="429.300" text-anchor="middle" font-size="9.300" fill="#dcdcdc" font-family="Liberation Sans" letter-spacing="-0.2">450</text>
<text x="1162.9" y="429.300" text-anchor="middle" font-size="9.300" fill="#dcdcdc" font-family="Liberation Sans" letter-spacing="-0.2">500</text>
<text x="1204.3" y="429.300" text-anchor="middle" font-size="9.300" fill="#dcdcdc" font-family="Liberation Sans" letter-spacing="-0.2">550</text>
<text x="1245.6" y="429.300" text-anchor="middle" font-size="9.300" fill="#dcdcdc" font-family="Liberation Sans" letter-spacing="-0.2">600</text>
<text x="867" y="176.9" text-anchor="end" font-size="9.300" fill="#dcdcdc" font-family="Liberation Sans" letter-spacing="-0.2">90</text>
<text x="867" y="295.2" text-anchor="end" font-size="9.300" fill="#dcdcdc" font-family="Liberation Sans" letter-spacing="-0.2">10</text>
<text x="867" y="419.3" text-anchor="end" font-size="9.300" fill="#dcdcdc" font-family="Liberation Sans" letter-spacing="-0.2">1</text>
<text x="1059" y="448" text-anchor="middle" font-size="11.500" fill="#dcdcdc" font-family="Liberation Sans" letter-spacing="-0.15">Spez. Enthalpie [kJ/kg]</text>
<text transform="translate(851.500 295) rotate(-90)" text-anchor="middle" font-size="11.500" fill="#dcdcdc" font-family="Liberation Sans" letter-spacing="-0.1">Druck [bar]</text>
</svg>
<svg class="a" style="left:233px;top:466px" width="13" height="12" viewBox="0 0 13 12"><rect x=".5" y=".5" width="11" height="10" fill="#e6edfa" stroke="#4a6cb0" stroke-width=".9"/><rect x=".5" y=".5" width="11" height="2.500" fill="#5a86d0"/><path d="M2 9q2-5 4-2t4-2" stroke="#d02040" stroke-width="1.200" fill="none"/><circle cx="4" cy="8" r="1.500" fill="#3a5ac0"/></svg>
<div class="wt" style="left:255px;top:466px">[7] Panel-Fenster</div>
<div class="wb" style="left:648px;top:467px;width:10px;height:10px"></div><div class="wb" style="left:659.6px;top:467px;width:10px;height:10px"></div><div class="wb" style="left:671.2px;top:467px;width:10px;height:10px"></div><div class="a" style="left:650.5px;top:473px;width:5px;height:2px;background:#7a808a"></div><div class="a" style="left:662.6px;top:471px;width:4px;height:4px;border:1px solid #7a808a"></div><div class="a" style="left:664.6px;top:469px;width:4px;height:4px;border:1px solid #7a808a;border-bottom:none;border-left:none"></div><svg class="a" style="left:672.8px;top:469px" width="7" height="7"><path d="M1 1l5 5M6 1l-5 5" stroke="#7a808a" stroke-width="1.300"/></svg>
<div class="a" style="left:235px;top:479px;width:449px;height:286px;background:#fff"></div>
<svg class="a" style="left:234px;top:479px" width="450" height="286" viewBox="234 479 450 286">
<path d="M277.6 539.1 L367.9 483 L380.8 485.2 L290.5 541.5Z" fill="#dedfe2" stroke="#3a3a3a" stroke-width="0.8" stroke-linejoin="round"/>
<path d="M277.6 539.1 L290.5 541.5 L290.5 650 L277.6 648Z" fill="#c2c3c7" stroke="#3a3a3a" stroke-width="0.8" stroke-linejoin="round"/>
<path d="M290.5 541.5 L380.8 485.2 L380.8 591 L290.5 647Z" fill="#d8d9dc" stroke="#3a3a3a" stroke-width="0.8" stroke-linejoin="round"/>
<path d="M509.3 657.7 L599.7 602.7 L612.5 605.2 L522.7 662.6Z" fill="#dedfe2" stroke="#3a3a3a" stroke-width="0.8" stroke-linejoin="round"/>
<path d="M509.3 657.7 L522.7 662.6 L522.7 765.4 L509.3 763.1Z" fill="#c2c3c7" stroke="#3a3a3a" stroke-width="0.8" stroke-linejoin="round"/>
<path d="M522.7 662.6 L612.5 605.2 L612.5 708.4 L522.7 765.4Z" fill="#d8d9dc" stroke="#3a3a3a" stroke-width="0.8" stroke-linejoin="round"/>
<path d="M455.300 583.500 Q447 590 448.400 598.200 Q450 610 458 617.200 L513.800 630.900 L524 600 L522.300 588.200 L505.400 580.800 L489.600 581.400 L480.100 589.800Z" fill="#d8d9dc" stroke="#3a3a3a" stroke-width=".8" stroke-linejoin="round"/>
<ellipse cx="507.5" cy="607.7" rx="17.400" ry="20.600" fill="#d8d9dc" stroke="#3a3a3a" stroke-width=".8" transform="rotate(4 507.5 607.7)"/>
<ellipse cx="512.8" cy="608.8" rx="17.400" ry="20.600" fill="#d8d9dc" stroke="#3a3a3a" stroke-width=".8" transform="rotate(4 512.8 608.8)"/>
<ellipse cx="520.7" cy="610.4" rx="17.400" ry="20.600" fill="#d8d9dc" stroke="#3a3a3a" stroke-width=".8" transform="rotate(4 520.7 610.4)"/>
<ellipse cx="520.700" cy="610.400" rx="8.400" ry="9.500" fill="#8f8f93" stroke="#3a3a3a" stroke-width=".8"/><circle cx="519.100" cy="610.400" r="2" fill="#fff"/>
<path d="M455.3 570.8 L476.9 564 L500.6 568.2 L478 575Z" fill="#dcdde0" stroke="#3a3a3a" stroke-width="0.8" stroke-linejoin="round"/>
<path d="M455.3 570.8 L478 575 L478 593.5 L455.3 588.7Z" fill="#d8d9dc" stroke="#3a3a3a" stroke-width="0.8" stroke-linejoin="round"/>
<path d="M478 575 L500.6 568.2 L500.6 581.4 L478 593.5Z" fill="#d8d9dc" stroke="#3a3a3a" stroke-width="0.8" stroke-linejoin="round"/>
<path d="M338.500 646V634L398.300 595V496" stroke="#000" stroke-width="2" fill="none"/>
<path d="M473.400 571 V567 Q473.400 561 468 559.700 L421 548.500 Q410.500 546 410.500 538 V490 Q410.500 480.200 403 485 L284.0 562.7 A6.9 6.9 0 0 0 291.2 574.5 L375.2 526.2 A6.9 6.9 0 0 1 382.4 538.0 L284.0 600.1 A6.9 6.9 0 0 0 291.2 611.9 L375.2 563.6 A6.9 6.9 0 0 1 382.4 575.4 L286 636.500 A9.300 9.300 0 0 0 285 654.800 L298.800 658.100 L324 664" stroke="#2a7290" stroke-width="9.1" fill="none" stroke-linecap="butt" stroke-linejoin="round"/><path d="M473.400 571 V567 Q473.400 561 468 559.700 L421 548.500 Q410.500 546 410.500 538 V490 Q410.500 480.200 403 485 L284.0 562.7 A6.9 6.9 0 0 0 291.2 574.5 L375.2 526.2 A6.9 6.9 0 0 1 382.4 538.0 L284.0 600.1 A6.9 6.9 0 0 0 291.2 611.9 L375.2 563.6 A6.9 6.9 0 0 1 382.4 575.4 L286 636.500 A9.300 9.300 0 0 0 285 654.800 L298.800 658.100 L324 664" stroke="#40b8de" stroke-width="8.0" fill="none" stroke-linecap="butt" stroke-linejoin="round"/>
<path d="M486.100 568.500 V561 Q486.100 553 494 554.300 L609 573.200 Q637.500 578 637.500 594 Q637.500 604 625 611 L613 618.700 L518.2 680.3 A6.6 6.6 0 0 0 524.8 691.7 L609.7 643.8 A6.6 6.6 0 0 1 616.3 655.2 L518.2 717.3 A6.6 6.6 0 0 0 524.8 728.7 L609.7 680.3 A6.6 6.6 0 0 1 616.3 691.7 L530 746.500 Q519 754.500 506 755.500 L497 755.500 Q481.300 755.500 481.300 742" stroke="#6e0a22" stroke-width="9.1" fill="none" stroke-linecap="butt" stroke-linejoin="round"/><path d="M486.100 568.500 V561 Q486.100 553 494 554.300 L609 573.200 Q637.500 578 637.500 594 Q637.500 604 625 611 L613 618.700 L518.2 680.3 A6.6 6.6 0 0 0 524.8 691.7 L609.7 643.8 A6.6 6.6 0 0 1 616.3 655.2 L518.2 717.3 A6.6 6.6 0 0 0 524.8 728.7 L609.7 680.3 A6.6 6.6 0 0 1 616.3 691.7 L530 746.500 Q519 754.500 506 755.500 L497 755.500 Q481.300 755.500 481.300 742" stroke="#b2002f" stroke-width="8.0" fill="none" stroke-linecap="butt" stroke-linejoin="round"/>
<path d="M337.400 690 V694 Q337.400 704 346 699.500 L409 660.800 Q412.500 658.800 417 659.500 L470 668 Q481.200 670 481.200 679 V690" stroke="#6e0a22" stroke-width="9.1" fill="none" stroke-linecap="butt" stroke-linejoin="round"/><path d="M337.400 690 V694 Q337.400 704 346 699.500 L409 660.800 Q412.500 658.800 417 659.500 L470 668 Q481.200 670 481.200 679 V690" stroke="#b2002f" stroke-width="8.0" fill="none" stroke-linecap="butt" stroke-linejoin="round"/>
<path d="M469.750 569 V570.800 Q473.400 573 477.050 570.800 V569Z" fill="#40b8de"/>
<path d="M482 566 V568.300 Q486.100 570.500 490.200 568.300 V566Z" fill="#b2002f"/>
<g transform="rotate(7 567 687.200)">
<ellipse cx="567" cy="687.200" rx="37" ry="48" fill="rgba(255,255,255,.55)" stroke="#777" stroke-width=".9"/>
<ellipse cx="567" cy="687.200" rx="33" ry="44" fill="none" stroke="#777" stroke-width=".8"/>
<g transform="rotate(20 567 687.200)"><path d="M563 676 L557 648 Q567 641 577 648 L571 676Z" fill="rgba(150,150,156,.42)" stroke="#6a6a6a" stroke-width=".8"/></g>
<g transform="rotate(92 567 687.200)"><path d="M563 676 L557 648 Q567 641 577 648 L571 676Z" fill="rgba(150,150,156,.42)" stroke="#6a6a6a" stroke-width=".8"/></g>
<g transform="rotate(164 567 687.200)"><path d="M563 676 L557 648 Q567 641 577 648 L571 676Z" fill="rgba(150,150,156,.42)" stroke="#6a6a6a" stroke-width=".8"/></g>
<g transform="rotate(236 567 687.200)"><path d="M563 676 L557 648 Q567 641 577 648 L571 676Z" fill="rgba(150,150,156,.42)" stroke="#6a6a6a" stroke-width=".8"/></g>
<g transform="rotate(308 567 687.200)"><path d="M563 676 L557 648 Q567 641 577 648 L571 676Z" fill="rgba(150,150,156,.42)" stroke="#6a6a6a" stroke-width=".8"/></g>
<ellipse cx="567" cy="687.200" rx="13" ry="16" fill="rgba(140,140,145,.55)" stroke="#666" stroke-width=".7"/>
<ellipse cx="566" cy="687.200" rx="4.500" ry="5.500" fill="none" stroke="#555" stroke-width=".8"/><ellipse cx="566" cy="687.200" rx="2.200" ry="2.800" fill="none" stroke="#555" stroke-width=".7"/>
</g>
<path d="M466.900 688 V733 Q466.900 741 481.500 741 Q496.100 741 496.100 733 V688Z" fill="#d8d9dc" stroke="#3a3a3a" stroke-width=".8"/>
<ellipse cx="481.500" cy="688" rx="14.600" ry="5.500" fill="#e2e3e6" stroke="#3a3a3a" stroke-width=".8"/>
<path d="M466.900 695 Q481.500 704 496.100 695 M466.900 700.500 Q481.500 709.500 496.100 700.500" fill="none" stroke="#3a3a3a" stroke-width=".7"/>
<path d="M477 680 V690 Q481.200 692.500 485.400 690 V680Z" fill="#b2002f"/>
<path d="M325 656 L346.300 656 V680 H331 V672 L322 669 V661Z" fill="#d8d9dc" stroke="#3a3a3a" stroke-width=".8" stroke-linejoin="round"/>
<rect x="331.400" y="680.500" width="12" height="11" fill="#d8d9dc" stroke="#3a3a3a" stroke-width=".8"/>
<ellipse cx="338.500" cy="653.500" rx="15" ry="5.500" fill="#c2c3c7" stroke="#3a3a3a" stroke-width=".8"/>
<ellipse cx="338.500" cy="649.500" rx="18.600" ry="7" fill="#d8d9dc" stroke="#3a3a3a" stroke-width=".8"/>
<ellipse cx="338.500" cy="645.200" rx="18.600" ry="7" fill="#dedfe2" stroke="#3a3a3a" stroke-width=".8"/>
<ellipse cx="338.500" cy="645.200" rx="7.400" ry="3.200" fill="#d8d9dc" stroke="#3a3a3a" stroke-width=".8"/>
<path d="M338.500 646V634" stroke="#000" stroke-width="2"/>
<path d="M411.500 654 V663 Q417 666 422.500 663 V654Z" fill="#fff" stroke="#3a3a3a" stroke-width=".7"/><ellipse cx="417" cy="654" rx="5.500" ry="2.200" fill="#fff" stroke="#3a3a3a" stroke-width=".7"/>
<path d="M449.300 539 H454.200 V550 Q456.500 553 454.500 555.500 H449 Q447 553 449.300 550Z" fill="#fff" stroke="#777" stroke-width=".7"/>
<defs><radialGradient id="gg" cx=".45" cy=".35" r=".7"><stop offset="0" stop-color="#9dff8a"/><stop offset=".55" stop-color="#3bea2c"/><stop offset="1" stop-color="#1fc41a"/></radialGradient></defs>
<circle cx="434.9" cy="551.8" r="8.300" fill="url(#gg)"/>
<circle cx="521" cy="559" r="8.300" fill="url(#gg)"/>
<circle cx="298.8" cy="658.1" r="8.300" fill="url(#gg)"/>
<circle cx="375.7" cy="686.6" r="8.300" fill="url(#gg)"/>
<rect x="425.6" y="521.6" width="23.6" height="15.8" fill="#f0f0f0"/>
<text x="437.40000000000003" y="534.1" text-anchor="middle" font-size="13" letter-spacing="0" fill="#111" font-family="Liberation Sans">P4</text>
<rect x="535.3" y="543.6" width="23.6" height="14.6" fill="#f0f0f0"/>
<text x="547.0999999999999" y="555.5" text-anchor="middle" font-size="13" letter-spacing="0" fill="#111" font-family="Liberation Sans">P1</text>
<rect x="284.5" y="672.5" width="23.6" height="16" fill="#f0f0f0"/>
<text x="296.3" y="685.1" text-anchor="middle" font-size="13" letter-spacing="0" fill="#111" font-family="Liberation Sans">P3</text>
<rect x="367.1" y="651.3" width="24" height="15.6" fill="#f0f0f0"/>
<text x="379.1" y="663.6999999999999" text-anchor="middle" font-size="13" letter-spacing="0" fill="#111" font-family="Liberation Sans">P2</text>
<rect x="413.3" y="565.5" width="36" height="16" fill="#fff" stroke="#dfe1ea" stroke-width="1"/>
<text x="415.8" y="576.9" font-size="9.800" letter-spacing="0" fill="#222" font-family="Liberation Sans">3,35</text>
<rect x="523" y="573.3" width="36" height="16" fill="#fff" stroke="#dfe1ea" stroke-width="1"/>
<text x="525.5" y="584.6999999999999" font-size="9.800" letter-spacing="0" fill="#222" font-family="Liberation Sans">14,94</text>
<rect x="284.5" y="693.5" width="35.7" height="15.8" fill="#fff" stroke="#dfe1ea" stroke-width="1"/>
<text x="287.0" y="704.8" font-size="9.800" letter-spacing="0" fill="#222" font-family="Liberation Sans">3,65</text>
<rect x="390" y="680.5" width="35.4" height="15.8" fill="#fff" stroke="#dfe1ea" stroke-width="1"/>
<text x="392.5" y="691.8" font-size="9.800" letter-spacing="0" fill="#222" font-family="Liberation Sans">14,94</text>
<text x="242.3" y="507.4" font-size="16" fill="#161616" stroke="#161616" stroke-width=".25" font-family="Liberation Sans" letter-spacing="0" textLength="74" lengthAdjust="spacingAndGlyphs">Evaporator</text>
<text x="476.9" y="539.6" font-size="16" fill="#161616" stroke="#161616" stroke-width=".25" font-family="Liberation Sans" letter-spacing="0" textLength="81" lengthAdjust="spacingAndGlyphs">Compressor</text>
<text x="562.9" y="762" font-size="16" fill="#161616" stroke="#161616" stroke-width=".25" font-family="Liberation Sans" letter-spacing="0" textLength="72.6" lengthAdjust="spacingAndGlyphs">Condenser</text>
<text x="431" y="762" font-size="16" fill="#161616" stroke="#161616" stroke-width=".25" font-family="Liberation Sans" letter-spacing="0" textLength="36.5" lengthAdjust="spacingAndGlyphs">Dryer</text>
<text x="285.8" y="723.6" font-size="16" fill="#161616" stroke="#161616" stroke-width=".25" font-family="Liberation Sans" letter-spacing="0" textLength="108.5" lengthAdjust="spacingAndGlyphs">Expansion Valve</text>
</svg>
<svg class="a" style="left:689px;top:467px" width="13" height="11" viewBox="0 0 13 11"><rect x=".5" y=".5" width="11" height="8" fill="#eef2fb" stroke="#4a5a9a" stroke-width=".9"/><rect x=".5" y=".5" width="11" height="2" fill="#6a86c8"/><rect x="6" y="6" width="6" height="4.500" fill="#fff"/><path d="M7.500 7v3M10 7v3" stroke="#d01020" stroke-width="1.200"/></svg>
<div class="wt" style="left:711px;top:466px">[4] Enthalpy</div>
<div class="wb" style="left:964px;top:467px;width:10px;height:10px"></div><div class="wb" style="left:975.6px;top:467px;width:10px;height:10px"></div><div class="wb" style="left:987.2px;top:467px;width:10px;height:10px"></div><div class="a" style="left:966.5px;top:473px;width:5px;height:2px;background:#7a808a"></div><div class="a" style="left:978.6px;top:471px;width:4px;height:4px;border:1px solid #7a808a"></div><div class="a" style="left:980.6px;top:469px;width:4px;height:4px;border:1px solid #7a808a;border-bottom:none;border-left:none"></div><svg class="a" style="left:988.8px;top:469px" width="7" height="7"><path d="M1 1l5 5M6 1l-5 5" stroke="#7a808a" stroke-width="1.300"/></svg>
<div class="a" style="left:689px;top:481px;width:44px;height:32px;background:linear-gradient(#f6f6f6,#ececec);border:1px solid #fdfdfd;border-right-color:#a9a9a9;border-bottom-color:#a9a9a9"></div><div class="t" style="left:695px;top:483px;color:#222;font-size:9.300px;letter-spacing:0">h1</div>
<div class="a" style="left:689px;top:513px;width:44px;height:32px;background:linear-gradient(#f6f6f6,#ececec);border:1px solid #fdfdfd;border-right-color:#a9a9a9;border-bottom-color:#a9a9a9"></div><div class="t" style="left:695px;top:515px;color:#222;font-size:9.300px;letter-spacing:0">h2</div>
<div class="a" style="left:689px;top:545px;width:44px;height:32px;background:linear-gradient(#f2f2f2,#c9c9c9);border:1px solid #fdfdfd;border-right-color:#a9a9a9;border-bottom-color:#a9a9a9"></div><div class="t" style="left:695px;top:547px;color:#222;font-size:9.300px;letter-spacing:0">h3</div>
<div class="a" style="left:689px;top:577px;width:44px;height:32px;background:linear-gradient(#f6f6f6,#ececec);border:1px solid #fdfdfd;border-right-color:#a9a9a9;border-bottom-color:#a9a9a9"></div><div class="t" style="left:695px;top:579px;color:#222;font-size:9.300px;letter-spacing:0">h4</div>
<div class="a" style="left:735px;top:481px;width:1px;height:130px;background:#d8d8d8"></div>
<div class="a" style="left:737px;top:481px;width:259px;height:130px;background:#000;border-top:1px solid #555;border-left:1px solid #555"></div>
<svg class="a" style="left:1005px;top:467px" width="13" height="11" viewBox="0 0 13 11"><rect x=".5" y=".5" width="11" height="8" fill="#eef2fb" stroke="#4a5a9a" stroke-width=".9"/><rect x=".5" y=".5" width="11" height="2" fill="#6a86c8"/><rect x="6" y="6" width="6" height="4.500" fill="#fff"/><path d="M7.500 7v3M10 7v3" stroke="#d01020" stroke-width="1.200"/></svg>
<div class="wt" style="left:1027px;top:466px">[5] Pressure</div>
<div class="wb" style="left:1227px;top:467px;width:10px;height:10px"></div><div class="wb" style="left:1238.6px;top:467px;width:10px;height:10px"></div><div class="wb" style="left:1250.2px;top:467px;width:10px;height:10px"></div><div class="a" style="left:1229.5px;top:473px;width:5px;height:2px;background:#7a808a"></div><div class="a" style="left:1241.6px;top:471px;width:4px;height:4px;border:1px solid #7a808a"></div><div class="a" style="left:1243.6px;top:469px;width:4px;height:4px;border:1px solid #7a808a;border-bottom:none;border-left:none"></div><svg class="a" style="left:1251.8px;top:469px" width="7" height="7"><path d="M1 1l5 5M6 1l-5 5" stroke="#7a808a" stroke-width="1.300"/></svg>
<div class="a" style="left:1005px;top:481px;width:44px;height:32px;background:linear-gradient(#f6f6f6,#ececec);border:1px solid #fdfdfd;border-right-color:#a9a9a9;border-bottom-color:#a9a9a9"></div><div class="t" style="left:1011px;top:483px;color:#222;font-size:9.300px;letter-spacing:0">p1</div>
<div class="a" style="left:1005px;top:513px;width:44px;height:32px;background:linear-gradient(#f6f6f6,#ececec);border:1px solid #fdfdfd;border-right-color:#a9a9a9;border-bottom-color:#a9a9a9"></div><div class="t" style="left:1011px;top:515px;color:#222;font-size:9.300px;letter-spacing:0">p2</div>
<div class="a" style="left:1005px;top:545px;width:44px;height:32px;background:linear-gradient(#f6f6f6,#ececec);border:1px solid #fdfdfd;border-right-color:#a9a9a9;border-bottom-color:#a9a9a9"></div><div class="t" style="left:1011px;top:547px;color:#222;font-size:9.300px;letter-spacing:0">p3</div>
<div class="a" style="left:1005px;top:577px;width:44px;height:32px;background:linear-gradient(#f2f2f2,#c9c9c9);border:1px solid #fdfdfd;border-right-color:#a9a9a9;border-bottom-color:#a9a9a9"></div><div class="t" style="left:1011px;top:579px;color:#222;font-size:9.300px;letter-spacing:0">p4</div>
<div class="a" style="left:1051px;top:481px;width:1px;height:130px;background:#d8d8d8"></div>
<div class="a" style="left:1053px;top:481px;width:206px;height:130px;background:#000;border-top:1px solid #555;border-left:1px solid #555"></div>
<svg class="a" style="left:0;top:0" width="1268" height="806" viewBox="0 0 1268 806">
<text transform="translate(757.2 502.9) scale(1 0.93)" font-family="Liberation Mono" font-weight="bold" font-size="29" letter-spacing="0" fill="#00ff00" stroke="#000" stroke-width=".55" xml:space="preserve">456.89 kJ/kg</text>
<text transform="translate(757.2 534.6) scale(1 0.93)" font-family="Liberation Mono" font-weight="bold" font-size="29" letter-spacing="0" fill="#00b400" stroke="#000" stroke-width=".55" xml:space="preserve">258.5 kJ/kg</text>
<text transform="translate(757.2 566.5) scale(1 0.93)" font-family="Liberation Mono" font-weight="bold" font-size="29" letter-spacing="0" fill="#d00000" stroke="#000" stroke-width=".55" xml:space="preserve">258.5 kJ/kg</text>
<text transform="translate(757.2 598.2) scale(1 0.93)" font-family="Liberation Mono" font-weight="bold" font-size="29" letter-spacing="0" fill="#ff0000" stroke="#000" stroke-width=".55" xml:space="preserve">410.43 kJ/kg</text>
<text transform="translate(1074.2 502.9) scale(1 0.93)" font-family="Liberation Mono" font-weight="bold" font-size="29" letter-spacing="0" fill="#ffff00" stroke="#000" stroke-width=".55" xml:space="preserve">14.98 bar</text>
<text transform="translate(1074.2 534.6) scale(1 0.93)" font-family="Liberation Mono" font-weight="bold" font-size="29" letter-spacing="0" fill="#5a5aa8" stroke="#000" stroke-width=".55" xml:space="preserve">14.943 bar</text>
<text transform="translate(1074.2 566.5) scale(1 0.93)" font-family="Liberation Mono" font-weight="bold" font-size="29" letter-spacing="0" fill="#2800c8" stroke="#000" stroke-width=".55" xml:space="preserve">3.646 bar</text>
<text transform="translate(1074.2 598.2) scale(1 0.93)" font-family="Liberation Mono" font-weight="bold" font-size="29" letter-spacing="0" fill="#00ffff" stroke="#000" stroke-width=".55" xml:space="preserve">3.352 bar</text>
<path d="M991.5 487.5 V512 M989.0 483.5 h5 l-2.500 4.500z M991.5 519.5 V544 M989.0 515.5 h5 l-2.500 4.500z M991.5 551.5 V576 M989.0 547.5 h5 l-2.500 4.500z M991.5 583.5 V607.5 M989.0 579.5 h5 l-2.500 4.500z M1254.8 487.5 V512 M1252.3 483.5 h5 l-2.500 4.500z M1254.8 519.5 V544 M1252.3 515.5 h5 l-2.500 4.500z M1254.8 551.5 V576 M1252.3 547.5 h5 l-2.500 4.500z M1254.8 583.5 V607.5 M1252.3 579.5 h5 l-2.500 4.500z" stroke="#18c8d8" stroke-width="1" fill="none"/>
</svg>
<svg class="a" style="left:689px;top:619px" width="12" height="12" viewBox="0 0 12 12"><rect x=".5" y="1.500" width="9" height="10" fill="#fff8c8" stroke="#6a7a3a" stroke-width=".9"/><path d="M2 4h6M2 6h6M2 8h4" stroke="#8a9a5a" stroke-width=".8"/><path d="M6 9l4.500-6 1.500 1-4.500 6z" fill="#e8b020" stroke="#7a5a10" stroke-width=".5"/><path d="M1 2.500l2-2h5" stroke="#3a8a3a" stroke-width="1" fill="none"/></svg>
<div class="wt" style="left:711px;top:619px">[6] Write</div>
<div class="wb" style="left:1227px;top:620px;width:10px;height:10px"></div><div class="wb" style="left:1238.6px;top:620px;width:10px;height:10px"></div><div class="wb" style="left:1250.2px;top:620px;width:10px;height:10px"></div><div class="a" style="left:1229.5px;top:626px;width:5px;height:2px;background:#7a808a"></div><div class="a" style="left:1241.6px;top:624px;width:4px;height:4px;border:1px solid #7a808a"></div><div class="a" style="left:1243.6px;top:622px;width:4px;height:4px;border:1px solid #7a808a;border-bottom:none;border-left:none"></div><svg class="a" style="left:1251.8px;top:622px" width="7" height="7"><path d="M1 1l5 5M6 1l-5 5" stroke="#7a808a" stroke-width="1.300"/></svg>
<div class="a" style="left:688px;top:632px;width:574px;height:145px;background:#fff;border:1px solid #b4c3d6"></div>
<div class="a" style="left:689px;top:633px;width:572px;height:15px;background:linear-gradient(#fff,#f3f3f3);border-bottom:1px solid #e0e0e0"></div>
<div class="t" style="left:693px;top:635px;color:#111;font-size:9.400px;letter-spacing:0">Type</div>
<div class="t" style="left:724px;top:635px;color:#111;font-size:9.400px;letter-spacing:0">Time</div>
<div class="t" style="left:792px;top:635px;color:#111;font-size:9.400px;letter-spacing:0">Message</div>
<div class="a" style="left:689px;top:691px;width:572px;height:13px;background:linear-gradient(#fbfbfb,#e4e4e4);border-top:1px solid #e2e2e2"></div>
<div class="a" style="left:718.500px;top:634px;width:1px;height:13px;background:#e2e2e2"></div><div class="a" style="left:787px;top:634px;width:1px;height:13px;background:#e2e2e2"></div>
<div class="a" style="left:689px;top:704px;width:572px;height:1px;background:#3cdcec"></div>
<div class="t" style="left:723px;top:650.5px;color:#111;font-size:9.400px;letter-spacing:0">-0.241s</div><div class="t" style="left:791px;top:650.5px;color:#111;font-size:9.400px;letter-spacing:0">Measurement start without recorder</div>
<svg class="a" style="left:693px;top:652.5px" width="13" height="9" viewBox="0 0 13 9"><rect x="0" y="2.500" width="2.800" height="5.500" fill="#1a2ab0"/><path d="M2.800 3h3l1.500-1.800h1.500l-.5 1.800h4.200v1.600H9.500v.6h1.800v1.400H9.500v.6h1.300v1.300H2.800z" fill="#e2e2e2" stroke="#3a3a3a" stroke-width=".7" stroke-linejoin="round"/></svg>
<div class="t" style="left:723px;top:664.1px;color:#111;font-size:9.400px;letter-spacing:0">-0.212s</div><div class="t" style="left:791px;top:664.1px;color:#111;font-size:9.400px;letter-spacing:0">Real time support: Synchronization: Software</div>
<div class="t" style="left:723px;top:677.7px;color:#111;font-size:9.400px;letter-spacing:0">0.001s</div><div class="t" style="left:791px;top:677.7px;color:#111;font-size:9.400px;letter-spacing:0">Measurement started at&nbsp; 6-6-2018 16:45:14</div>
<div class="t" style="left:723px;top:691.3px;color:#111;font-size:9.400px;letter-spacing:0">22.441s</div><div class="t" style="left:791px;top:691.3px;color:#111;font-size:9.400px;letter-spacing:0">Stop measurement</div>
<svg class="a" style="left:693px;top:693.3px" width="13" height="9" viewBox="0 0 13 9"><rect x="0" y="2.500" width="2.800" height="5.500" fill="#1a2ab0"/><path d="M2.800 3h3l1.500-1.800h1.500l-.5 1.800h4.200v1.600H9.500v.6h1.800v1.400H9.500v.6h1.300v1.300H2.800z" fill="#e2e2e2" stroke="#3a3a3a" stroke-width=".7" stroke-linejoin="round"/></svg>
<div class="t" style="left:723px;top:705px;color:#111;font-size:9.400px;letter-spacing:0">22.447s</div><div class="t" style="left:791px;top:705px;color:#111;font-size:9.400px;letter-spacing:0">Measurement stopped (OK) at&nbsp; 06/06/2018&nbsp;&nbsp;&nbsp; 04:45:36 PM</div>
<div class="a" style="left:689px;top:763px;width:572px;height:13px;background:#f0f0f0"></div>
<div class="a" style="left:693px;top:766px;border:3px solid transparent;border-right:4px solid #444;border-left:none"></div>
<div class="a" style="left:1252px;top:766px;border:3px solid transparent;border-left:4px solid #444;border-right:none"></div>
<div class="a" style="left:702px;top:764px;width:514px;height:12px;border:1px solid #9a9a9a;border-radius:2px;background:linear-gradient(#f4f4f4,#cfcfcf)"></div>
<div class="a" style="left:955px;top:767px;width:6px;height:6px;background:repeating-linear-gradient(90deg,#555 0,#555 1px,transparent 1px,transparent 2px)"></div>
</div>

<!-- ===== STATUS BAR ===== -->
<div id="status">
<div class="a" style="left:1px;top:785px;width:1266px;height:20px;background:#fff;border-top:1px solid #c8c8c8"></div>
<div class="a" style="left:920px;top:790px;width:11px;height:11px;border:1px solid #3a5aa0;background:linear-gradient(#7aa0e0 0,#7aa0e0 2px,#f4f7fd 2px)"></div>
<div class="a" style="left:937px;top:788px;width:1px;height:15px;background:#d0d0d0"></div>
<svg class="a" style="left:943px;top:789px" width="11" height="12" viewBox="0 0 11 12"><rect x="3.500" y=".5" width="7" height="10" fill="#f4f4f4" stroke="#999" stroke-width=".8"/><path d="M1 2l7 8M8 2l-7 8" stroke="#d01020" stroke-width="1.500"/></svg>
<div class="a" style="left:970px;top:788px;width:1px;height:15px;background:#d0d0d0"></div>
<div class="a" style="left:1074px;top:788px;width:1px;height:15px;background:#d0d0d0"></div>
<div class="t" style="left:1082px;top:790px;color:#333">StateChart1.cnmc</div>
</div>
</body></html>
